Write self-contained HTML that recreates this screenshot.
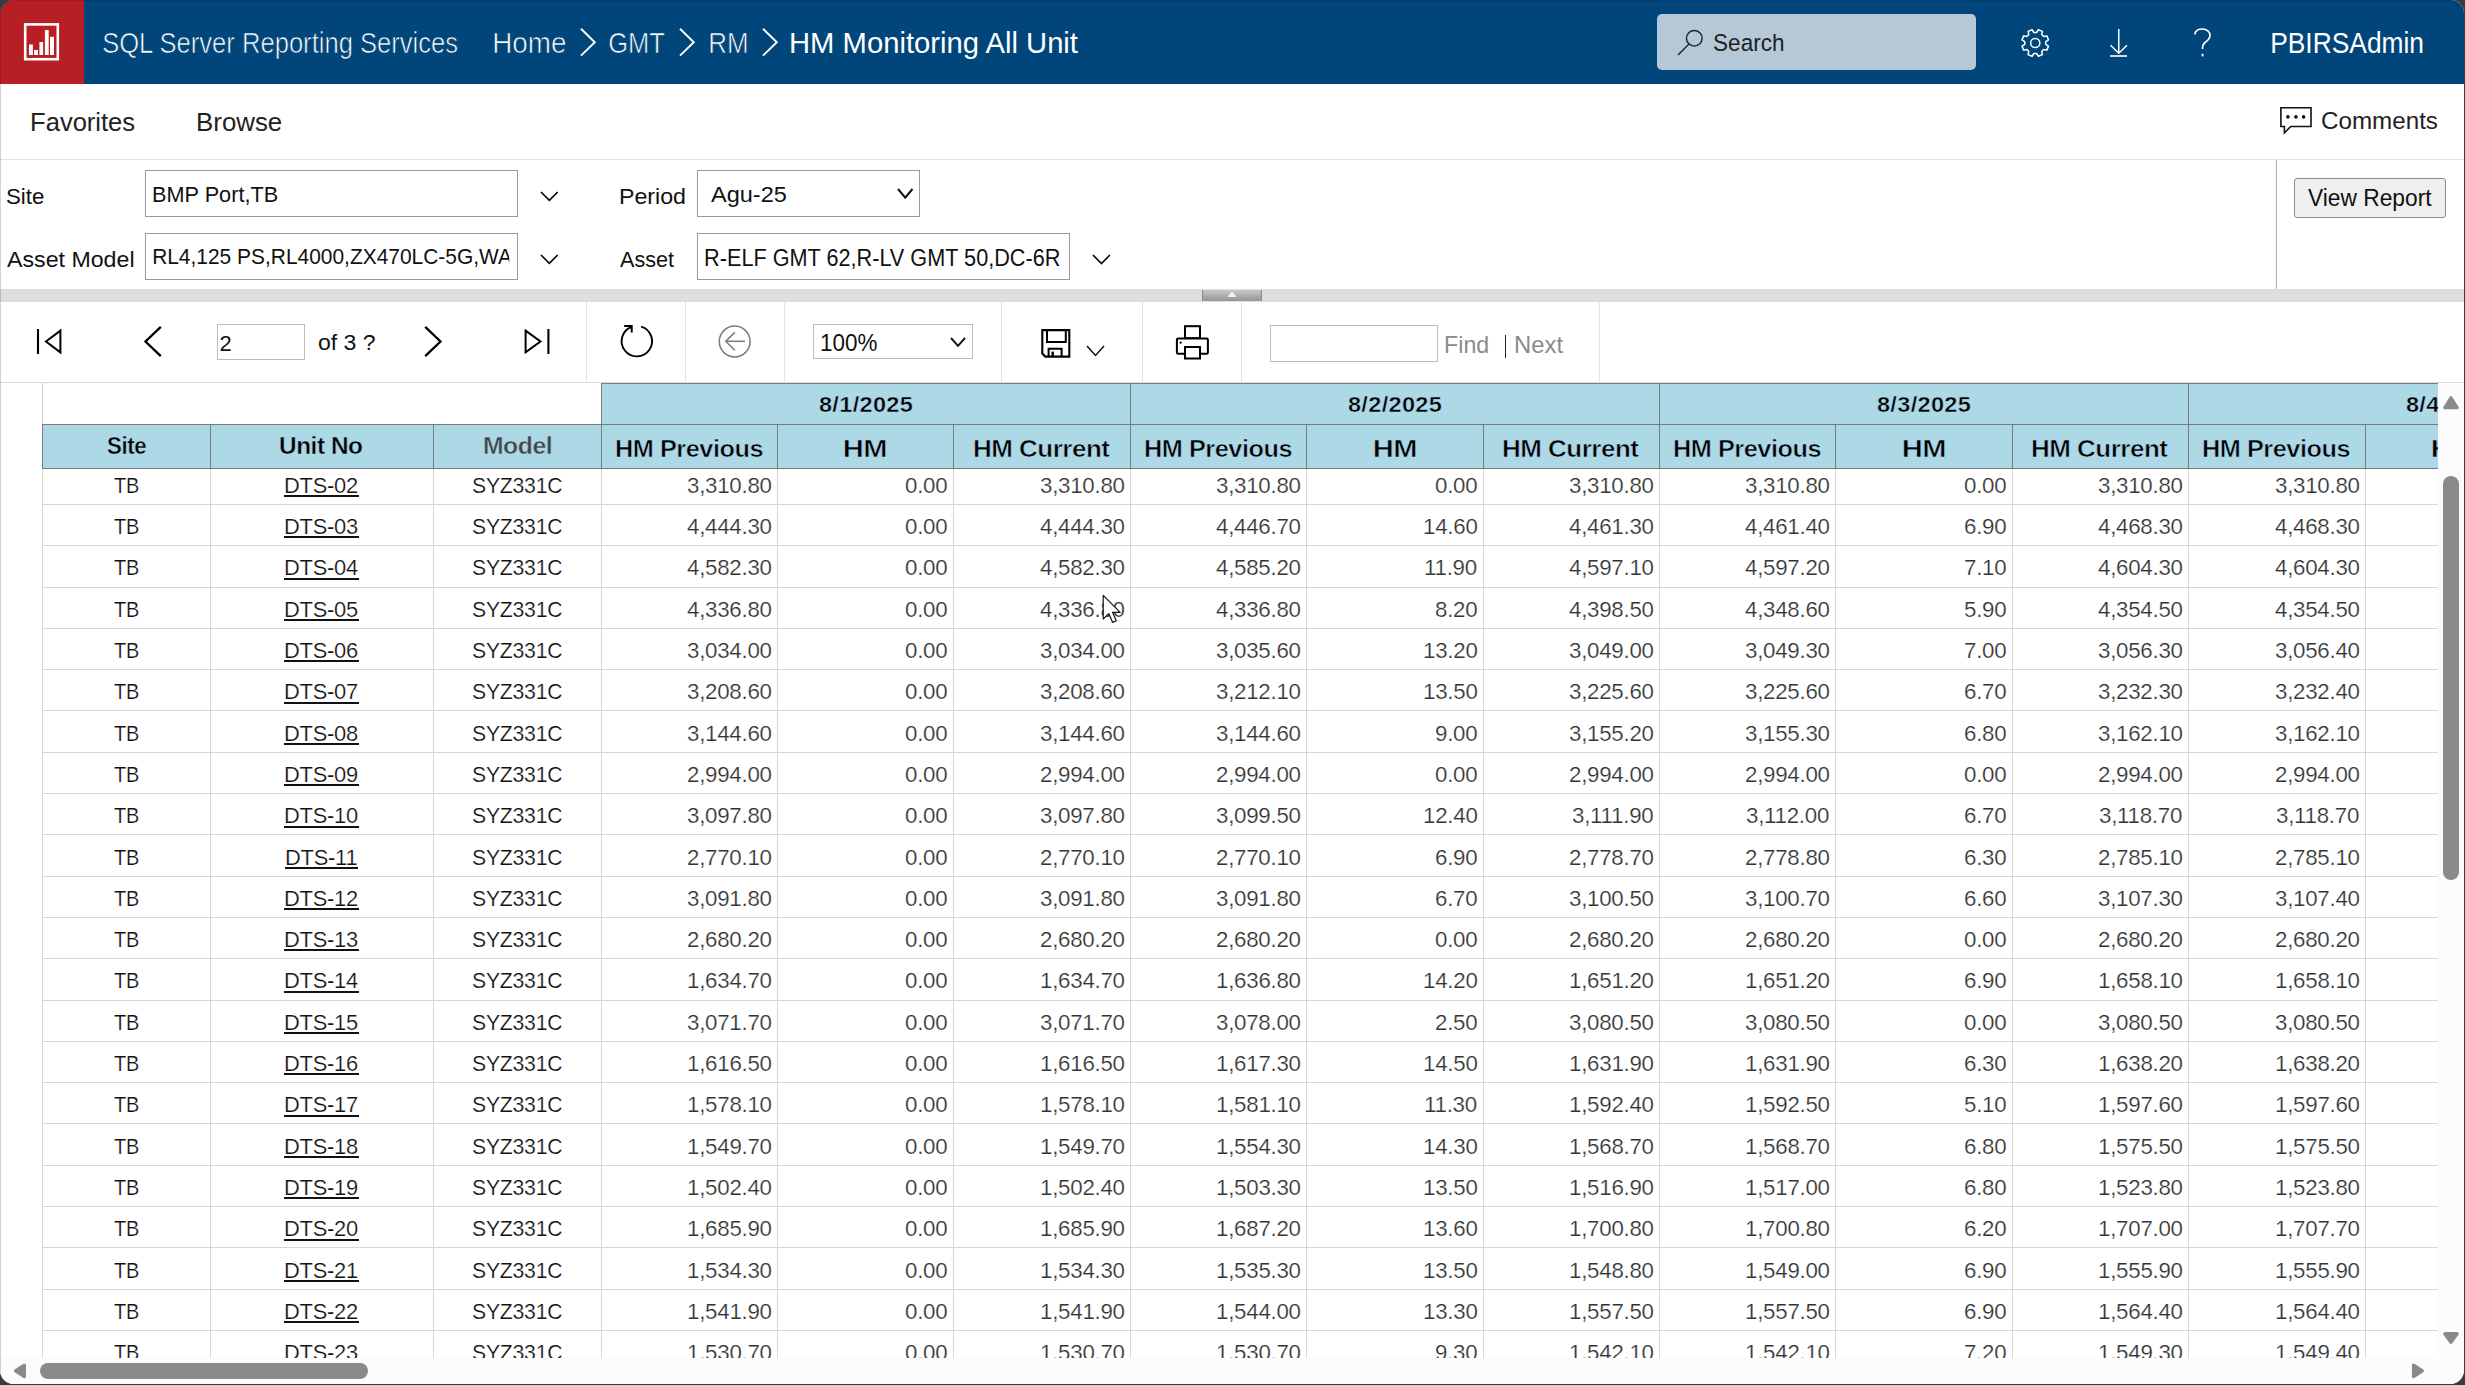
<!DOCTYPE html>
<html><head><meta charset="utf-8"><title>HM Monitoring All Unit - SQL Server Reporting Services</title>
<style>
html,body{margin:0;padding:0;background:#3b3b3b;}
#win{position:absolute;left:0;top:0;width:2465px;height:1385px;overflow:hidden;background:#3b3b3b;font-family:"Liberation Sans", sans-serif;}
#app{position:absolute;left:0;top:0;width:2464px;height:1383.8px;background:#fff;border-radius:15px 13px 14px 14px;overflow:hidden;}
#inner{position:absolute;left:0;top:0;width:2465px;height:1385px;}
</style></head><body><div id="win"><div id="app"><div id="inner">
<div style="position:absolute;left:0.00px;top:0.00px;width:2465.00px;height:84.00px;background:#00467a;"></div>
<div style="position:absolute;left:0.00px;top:0.00px;width:84.00px;height:84.00px;background:#b81f24;"></div>
<svg style="position:absolute;left:0px;top:0px;" width="84" height="84" viewBox="0 0 84 84"><rect x="25.2" y="24.4" width="32.6" height="34.8" fill="none" stroke="#fff" stroke-width="2.6"/>
<rect x="29" y="44.5" width="3.9" height="10.5" fill="#fff"/><rect x="34" y="50" width="4" height="5" fill="#fff"/>
<rect x="39.4" y="42" width="3.7" height="13" fill="#fff"/><rect x="44.9" y="30" width="3.8" height="25" fill="#fff"/>
<rect x="50" y="36.8" width="4" height="18.2" fill="#fff"/></svg>
<svg style="position:absolute;left:577.8px;top:25px;" width="22" height="34" viewBox="0 0 22 34"><polyline points="3,3.8 16.8,17.2 3,30.6" fill="none" stroke="#fff" stroke-width="1.9"/></svg>
<svg style="position:absolute;left:677.2px;top:25px;" width="22" height="34" viewBox="0 0 22 34"><polyline points="3,3.8 16.8,17.2 3,30.6" fill="none" stroke="#fff" stroke-width="1.9"/></svg>
<svg style="position:absolute;left:759.7px;top:25px;" width="22" height="34" viewBox="0 0 22 34"><polyline points="3,3.8 16.8,17.2 3,30.6" fill="none" stroke="#fff" stroke-width="1.9"/></svg>
<div style="position:absolute;left:1657.00px;top:14.00px;width:319.00px;height:56.00px;background:#b5c8d8;border-radius:5px;"></div>
<svg style="position:absolute;left:1670px;top:22px;" width="40" height="40" viewBox="0 0 40 40"><circle cx="24.3" cy="16.3" r="7.8" fill="none" stroke="#222" stroke-width="1.4"/><line x1="19" y1="22" x2="8" y2="33" stroke="#222" stroke-width="1.5"/></svg>
<svg style="position:absolute;left:2021px;top:29px;" width="29" height="28" viewBox="0 0 29 28"><polygon points="24.76,15.40 27.48,17.14 25.83,21.14 22.67,20.44 20.69,22.42 21.39,25.58 17.39,27.23 15.65,24.51 12.85,24.51 11.11,27.23 7.11,25.58 7.81,22.42 5.83,20.44 2.67,21.14 1.02,17.14 3.74,15.40 3.74,12.60 1.02,10.86 2.67,6.86 5.83,7.56 7.81,5.58 7.11,2.42 11.11,0.77 12.85,3.49 15.65,3.49 17.39,0.77 21.39,2.42 20.69,5.58 22.67,7.56 25.83,6.86 27.48,10.86 24.76,12.60" fill="none" stroke="#fff" stroke-width="1.5" stroke-linejoin="round"/><circle cx="14.25" cy="14" r="4.6" fill="none" stroke="#fff" stroke-width="1.5"/></svg>
<svg style="position:absolute;left:2105px;top:26px;" width="28" height="34" viewBox="0 0 28 34"><line x1="13.75" y1="3" x2="13.75" y2="27" stroke="#fff" stroke-width="1.5"/><polyline points="5.5,19.3 13.75,27.3 22,19.3" fill="none" stroke="#fff" stroke-width="1.5"/><line x1="5" y1="30" x2="22" y2="30" stroke="#fff" stroke-width="1.6"/></svg>
<svg style="position:absolute;left:2190px;top:26px;" width="26" height="34" viewBox="0 0 26 34"><path d="M5,8.5 C5,4.5 8.5,3 12.5,3 C17,3 20,6 20,9.5 C20,13 17.5,14.5 15,16.5 C13,18 12.5,19.5 12.5,23" fill="none" stroke="#fff" stroke-width="1.6"/><rect x="11.6" y="27.8" width="1.9" height="2.6" fill="#fff"/></svg>
<div style="position:absolute;left:0.00px;top:158.50px;width:2465.00px;height:1.50px;background:#e3e3e3;"></div>
<svg style="position:absolute;left:2276px;top:102px;" width="40" height="36" viewBox="0 0 40 36"><path d="M4.9,5.7 H35 V24.5 H14.8 L8.4,30.8 V24.5 H4.9 Z" fill="none" stroke="#111" stroke-width="1.6"/>
<circle cx="11.9" cy="14.9" r="1.8" fill="#111"/><circle cx="19.9" cy="14.9" r="1.8" fill="#111"/><circle cx="27.6" cy="14.9" r="1.8" fill="#111"/></svg>
<div style="position:absolute;left:2275.50px;top:160.00px;width:1.20px;height:129.00px;background:#b0b0b0;"></div>
<div style="position:absolute;left:145.00px;top:170.00px;width:373.00px;height:47.00px;background:#fff;border:1px solid #9a9a9a;box-sizing:border-box;"></div>
<div style="position:absolute;left:145.00px;top:233.00px;width:373.00px;height:47.00px;background:#fff;border:1px solid #9a9a9a;box-sizing:border-box;"></div>
<svg style="position:absolute;left:537.8px;top:188.8px;" width="22.7" height="14.4" viewBox="0 0 22.7 14.4"><polyline points="3,3 11.35,11.4 19.7,3" fill="none" stroke="#000" stroke-width="1.6"/></svg>
<svg style="position:absolute;left:537.8px;top:251.8px;" width="22.7" height="14.4" viewBox="0 0 22.7 14.4"><polyline points="3,3 11.35,11.4 19.7,3" fill="none" stroke="#000" stroke-width="1.6"/></svg>
<div style="position:absolute;left:697.00px;top:170.00px;width:223.00px;height:46.50px;background:#fff;border:1px solid #9a9a9a;box-sizing:border-box;"></div>
<svg style="position:absolute;left:895px;top:186.3px;" width="20.5" height="14.6" viewBox="0 0 20.5 14.6"><polyline points="3,3 10.25,11.6 17.5,3" fill="none" stroke="#111" stroke-width="2.0"/></svg>
<div style="position:absolute;left:697.00px;top:233.00px;width:373.00px;height:47.00px;background:#fff;border:1px solid #9a9a9a;box-sizing:border-box;"></div>
<svg style="position:absolute;left:1089.8px;top:251.6px;" width="22.9" height="14.5" viewBox="0 0 22.9 14.5"><polyline points="3,3 11.45,11.5 19.9,3" fill="none" stroke="#000" stroke-width="1.6"/></svg>
<div style="position:absolute;left:2294.00px;top:178.00px;width:151.60px;height:39.50px;background:#efefef;border:1.2px solid #8c8c8c;border-radius:3px;box-sizing:border-box;"></div>
<div style="position:absolute;left:0.00px;top:289.00px;width:2465.00px;height:13.00px;background:#dedede;"></div>
<div style="position:absolute;left:1202.00px;top:290.00px;width:60.00px;height:11.00px;background:linear-gradient(#c9c9c9,#969696);box-shadow: inset 1px 0 0 #8a8a8a, inset -1px 0 0 #8a8a8a;"></div>
<svg style="position:absolute;left:1226px;top:290px;" width="12" height="8" viewBox="0 0 12 8"><polygon points="1.3,7 6,1.4 10.7,7" fill="#f0f0f0"/></svg>
<div style="position:absolute;left:0.00px;top:381.60px;width:2465.00px;height:1.20px;background:#dcdcdc;"></div>
<div style="position:absolute;left:586.00px;top:302.00px;width:1.10px;height:80.00px;background:#e2e2e2;"></div>
<div style="position:absolute;left:685.00px;top:302.00px;width:1.10px;height:80.00px;background:#e2e2e2;"></div>
<div style="position:absolute;left:783.90px;top:302.00px;width:1.10px;height:80.00px;background:#e2e2e2;"></div>
<div style="position:absolute;left:1000.70px;top:302.00px;width:1.10px;height:80.00px;background:#e2e2e2;"></div>
<div style="position:absolute;left:1142.00px;top:302.00px;width:1.10px;height:80.00px;background:#e2e2e2;"></div>
<div style="position:absolute;left:1240.90px;top:302.00px;width:1.10px;height:80.00px;background:#e2e2e2;"></div>
<div style="position:absolute;left:1598.80px;top:302.00px;width:1.10px;height:80.00px;background:#e2e2e2;"></div>
<svg style="position:absolute;left:30px;top:320px;" width="40" height="40" viewBox="0 0 40 40"><line x1="8" y1="9" x2="8" y2="34" stroke="#000" stroke-width="2.1"/><polygon points="30.4,10.6 16,21.5 30.4,32.4" fill="none" stroke="#000" stroke-width="2" stroke-linejoin="miter"/></svg>
<svg style="position:absolute;left:138px;top:320px;" width="30" height="42" viewBox="0 0 30 42"><polyline points="22.8,6.8 7.5,21.5 22.8,36.2" fill="none" stroke="#000" stroke-width="2.3"/></svg>
<div style="position:absolute;left:217.00px;top:324.00px;width:88.00px;height:36.00px;background:#fff;border:1px solid #bbbbbb;box-sizing:border-box;"></div>
<svg style="position:absolute;left:418px;top:320px;" width="30" height="42" viewBox="0 0 30 42"><polyline points="7.2,6.8 22.5,21.5 7.2,36.2" fill="none" stroke="#000" stroke-width="2.3"/></svg>
<svg style="position:absolute;left:515px;top:320px;" width="40" height="40" viewBox="0 0 40 40"><line x1="33.4" y1="9" x2="33.4" y2="34" stroke="#000" stroke-width="2.1"/><polygon points="10.6,10.6 25.5,21.5 10.6,32.4" fill="none" stroke="#000" stroke-width="2" stroke-linejoin="miter"/></svg>
<svg style="position:absolute;left:612px;top:318px;" width="48" height="46" viewBox="0 0 48 46"><path d="M19.6,8.9 A15.2,15.2 0 1 0 29.2,8.6" fill="none" stroke="#000" stroke-width="1.9"/><polyline points="12.2,8 19.7,8 19.7,14.5" fill="none" stroke="#000" stroke-width="2"/></svg>
<svg style="position:absolute;left:710px;top:318px;" width="48" height="46" viewBox="0 0 48 46"><circle cx="24.7" cy="23.5" r="15.4" fill="none" stroke="#7a7a7a" stroke-width="1.5"/><line x1="15.8" y1="23.3" x2="35" y2="23.3" stroke="#7a7a7a" stroke-width="1.5"/><polyline points="24.8,14.4 15.8,23.3 24.8,32.2" fill="none" stroke="#7a7a7a" stroke-width="1.5"/></svg>
<div style="position:absolute;left:813.00px;top:324.00px;width:160.00px;height:35.00px;background:#fff;border:1px solid #bbbbbb;box-sizing:border-box;"></div>
<svg style="position:absolute;left:947.9px;top:334.6px;" width="20" height="13.8" viewBox="0 0 20 13.8"><polyline points="3,3 10.0,10.8 17,3" fill="none" stroke="#111" stroke-width="1.9"/></svg>
<svg style="position:absolute;left:1036px;top:322px;" width="40" height="40" viewBox="0 0 40 40"><path d="M6.3,8.1 H33.3 V34.6 H9.3 L6.3,31.6 Z" fill="none" stroke="#000" stroke-width="2.1"/>
<path d="M11,8 V20 H29.8 V8" fill="none" stroke="#000" stroke-width="2"/>
<path d="M12.6,34.6 V26.8 H25.6 V34.6" fill="none" stroke="#000" stroke-width="2"/><rect x="15.5" y="29.6" width="2.4" height="4.5" fill="#000"/></svg>
<svg style="position:absolute;left:1084px;top:343.3px;" width="23" height="15.5" viewBox="0 0 23 15.5"><polyline points="3,3 11.5,12.5 20,3" fill="none" stroke="#111" stroke-width="1.5"/></svg>
<svg style="position:absolute;left:1170px;top:320px;" width="44" height="42" viewBox="0 0 44 42"><rect x="15" y="6.2" width="15" height="12" fill="none" stroke="#000" stroke-width="2"/>
<rect x="6.9" y="18.6" width="31" height="15.2" rx="1.2" fill="#fff" stroke="#000" stroke-width="2"/>
<rect x="15" y="27" width="15" height="11.5" fill="#fff" stroke="#000" stroke-width="2"/><circle cx="10.7" cy="22.7" r="1.1" fill="#000"/></svg>
<div style="position:absolute;left:1270.00px;top:325.00px;width:168.00px;height:37.00px;background:#fff;border:1px solid #bbbbbb;box-sizing:border-box;"></div>
<div style="position:absolute;left:1504.50px;top:335.00px;width:1.50px;height:22.50px;background:#222;"></div>
<div style="position:absolute;left:101.74px;top:29.35px;font-size:29.0px;line-height:29.0px;letter-spacing:0.000px;color:#fff;font-weight:normal;white-space:nowrap;transform:scaleX(0.8822);transform-origin:1.16px 0;-webkit-text-stroke:0.7px #00467a;">SQL Server Reporting Services</div>
<div style="position:absolute;left:491.64px;top:28.02px;font-size:29.5px;line-height:29.5px;letter-spacing:0.000px;color:#fff;font-weight:normal;white-space:nowrap;transform:scaleX(0.9433);transform-origin:2.36px 0;-webkit-text-stroke:0.7px #00467a;">Home</div>
<div style="position:absolute;left:608.12px;top:28.02px;font-size:29.5px;line-height:29.5px;letter-spacing:0.000px;color:#fff;font-weight:normal;white-space:nowrap;transform:scaleX(0.8637);transform-origin:1.48px 0;-webkit-text-stroke:0.7px #00467a;">GMT</div>
<div style="position:absolute;left:707.54px;top:28.02px;font-size:29.5px;line-height:29.5px;letter-spacing:0.000px;color:#fff;font-weight:normal;white-space:nowrap;transform:scaleX(0.8776);transform-origin:2.36px 0;-webkit-text-stroke:0.7px #00467a;">RM</div>
<div style="position:absolute;left:789.34px;top:28.02px;font-size:29.5px;line-height:29.5px;letter-spacing:0.000px;color:#fff;font-weight:normal;white-space:nowrap;transform:scaleX(0.9902);transform-origin:2.36px 0;">HM Monitoring All Unit</div>
<div style="position:absolute;left:1713.02px;top:31.06px;font-size:24.5px;line-height:24.5px;letter-spacing:0.000px;color:#222;font-weight:normal;white-space:nowrap;transform:scaleX(0.9193);transform-origin:0.98px 0;">Search</div>
<div style="position:absolute;left:2270.28px;top:28.75px;font-size:29.0px;line-height:29.0px;letter-spacing:0.000px;color:#fff;font-weight:normal;white-space:nowrap;transform:scaleX(0.9088);transform-origin:2.32px 0;">PBIRSAdmin</div>
<div style="position:absolute;left:30.48px;top:108.56px;font-size:26.5px;line-height:26.5px;letter-spacing:0.000px;color:#222;font-weight:normal;white-space:nowrap;transform:scaleX(0.9636);transform-origin:2.12px 0;">Favorites</div>
<div style="position:absolute;left:195.78px;top:108.56px;font-size:26.5px;line-height:26.5px;letter-spacing:0.000px;color:#222;font-weight:normal;white-space:nowrap;transform:scaleX(0.9744);transform-origin:2.12px 0;">Browse</div>
<div style="position:absolute;left:2320.68px;top:109.26px;font-size:24.5px;line-height:24.5px;letter-spacing:0.000px;color:#222;font-weight:normal;white-space:nowrap;transform:scaleX(0.9873);transform-origin:1.23px 0;">Comments</div>
<div style="position:absolute;left:5.70px;top:185.95px;font-size:22.5px;line-height:22.5px;letter-spacing:0.000px;color:#111;font-weight:normal;white-space:nowrap;transform:scaleX(0.9904);transform-origin:0.90px 0;">Site</div>
<div style="position:absolute;left:152.00px;top:183.75px;font-size:22.5px;line-height:22.5px;letter-spacing:0.000px;color:#111;font-weight:normal;white-space:nowrap;transform:scaleX(0.9633);transform-origin:1.80px 0;">BMP Port,TB</div>
<div style="position:absolute;left:6.60px;top:248.75px;font-size:22.5px;line-height:22.5px;letter-spacing:0.000px;color:#111;font-weight:normal;white-space:nowrap;transform:scaleX(1.0302);transform-origin:0.00px 0;">Asset Model</div>
<div style="position:absolute;left:152.00px;top:246.25px;font-size:22.5px;line-height:22.5px;letter-spacing:0.000px;color:#111;font-weight:normal;white-space:nowrap;width:383.9px;overflow:hidden;transform:scaleX(0.9300);transform-origin:1.80px 0;">RL4,125 PS,RL4000,ZX470LC-5G,WA</div>
<div style="position:absolute;left:618.60px;top:185.75px;font-size:22.5px;line-height:22.5px;letter-spacing:0.000px;color:#111;font-weight:normal;white-space:nowrap;transform:scaleX(1.0311);transform-origin:1.80px 0;">Period</div>
<div style="position:absolute;left:711.00px;top:183.95px;font-size:22.5px;line-height:22.5px;letter-spacing:0.000px;color:#111;font-weight:normal;white-space:nowrap;transform:scaleX(1.0454);transform-origin:0.00px 0;">Agu-25</div>
<div style="position:absolute;left:620.40px;top:248.75px;font-size:22.5px;line-height:22.5px;letter-spacing:0.000px;color:#111;font-weight:normal;white-space:nowrap;transform:scaleX(0.9588);transform-origin:0.00px 0;">Asset</div>
<div style="position:absolute;left:703.76px;top:246.53px;font-size:23.0px;line-height:23.0px;letter-spacing:0.000px;color:#111;font-weight:normal;white-space:nowrap;transform:scaleX(0.9418);transform-origin:1.84px 0;">R-ELF GMT 62,R-LV GMT 50,DC-6R</div>
<div style="position:absolute;left:2308.00px;top:187.20px;font-size:23.5px;line-height:23.5px;letter-spacing:0.000px;color:#111;font-weight:normal;white-space:nowrap;transform:scaleX(0.9685);transform-origin:0.00px 0;">View Report</div>
<div style="position:absolute;left:219.60px;top:332.57px;font-size:22px;line-height:22px;letter-spacing:0.000px;color:#111;font-weight:normal;white-space:nowrap;">2</div>
<div style="position:absolute;left:318.12px;top:332.37px;font-size:22px;line-height:22px;letter-spacing:0.000px;color:#111;font-weight:normal;white-space:nowrap;transform:scaleX(1.0475);transform-origin:0.88px 0;">of 3 ?</div>
<div style="position:absolute;left:820.29px;top:332.03px;font-size:23.0px;line-height:23.0px;letter-spacing:0.000px;color:#111;font-weight:normal;white-space:nowrap;transform:scaleX(0.9745);transform-origin:1.61px 0;">100%</div>
<div style="position:absolute;left:1443.74px;top:332.56px;font-size:24.5px;line-height:24.5px;letter-spacing:0.000px;color:#8a8a8a;font-weight:normal;white-space:nowrap;transform:scaleX(0.9453);transform-origin:1.96px 0;">Find</div>
<div style="position:absolute;left:1514.24px;top:332.56px;font-size:24.5px;line-height:24.5px;letter-spacing:0.000px;color:#8a8a8a;font-weight:normal;white-space:nowrap;transform:scaleX(0.9718);transform-origin:1.96px 0;">Next</div>
<div style="position:absolute;left:0;top:383px;width:2438px;height:974.5px;overflow:hidden;">
<div style="position:absolute;left:42.00px;top:85.00px;width:1.00px;height:889.50px;background:#d6d6d6;"></div>
<div style="position:absolute;left:210.00px;top:85.00px;width:1.00px;height:889.50px;background:#d6d6d6;"></div>
<div style="position:absolute;left:433.00px;top:85.00px;width:1.00px;height:889.50px;background:#d6d6d6;"></div>
<div style="position:absolute;left:601.00px;top:85.00px;width:1.00px;height:889.50px;background:#d6d6d6;"></div>
<div style="position:absolute;left:777.00px;top:85.00px;width:1.00px;height:889.50px;background:#d6d6d6;"></div>
<div style="position:absolute;left:953.00px;top:85.00px;width:1.00px;height:889.50px;background:#d6d6d6;"></div>
<div style="position:absolute;left:1130.00px;top:85.00px;width:1.00px;height:889.50px;background:#d6d6d6;"></div>
<div style="position:absolute;left:1306.00px;top:85.00px;width:1.00px;height:889.50px;background:#d6d6d6;"></div>
<div style="position:absolute;left:1483.00px;top:85.00px;width:1.00px;height:889.50px;background:#d6d6d6;"></div>
<div style="position:absolute;left:1659.00px;top:85.00px;width:1.00px;height:889.50px;background:#d6d6d6;"></div>
<div style="position:absolute;left:1835.00px;top:85.00px;width:1.00px;height:889.50px;background:#d6d6d6;"></div>
<div style="position:absolute;left:2012.00px;top:85.00px;width:1.00px;height:889.50px;background:#d6d6d6;"></div>
<div style="position:absolute;left:2188.00px;top:85.00px;width:1.00px;height:889.50px;background:#d6d6d6;"></div>
<div style="position:absolute;left:2365.00px;top:85.00px;width:1.00px;height:889.50px;background:#d6d6d6;"></div>
<div style="position:absolute;left:2541.00px;top:85.00px;width:1.00px;height:889.50px;background:#d6d6d6;"></div>
<div style="position:absolute;left:2718.00px;top:85.00px;width:1.00px;height:889.50px;background:#d6d6d6;"></div>
<div style="position:absolute;left:42.00px;top:121.00px;width:2396.00px;height:1.00px;background:#d6d6d6;"></div>
<div style="position:absolute;left:42.00px;top:162.00px;width:2396.00px;height:1.00px;background:#d6d6d6;"></div>
<div style="position:absolute;left:42.00px;top:204.00px;width:2396.00px;height:1.00px;background:#d6d6d6;"></div>
<div style="position:absolute;left:42.00px;top:245.00px;width:2396.00px;height:1.00px;background:#d6d6d6;"></div>
<div style="position:absolute;left:42.00px;top:286.00px;width:2396.00px;height:1.00px;background:#d6d6d6;"></div>
<div style="position:absolute;left:42.00px;top:327.00px;width:2396.00px;height:1.00px;background:#d6d6d6;"></div>
<div style="position:absolute;left:42.00px;top:369.00px;width:2396.00px;height:1.00px;background:#d6d6d6;"></div>
<div style="position:absolute;left:42.00px;top:410.00px;width:2396.00px;height:1.00px;background:#d6d6d6;"></div>
<div style="position:absolute;left:42.00px;top:451.00px;width:2396.00px;height:1.00px;background:#d6d6d6;"></div>
<div style="position:absolute;left:42.00px;top:493.00px;width:2396.00px;height:1.00px;background:#d6d6d6;"></div>
<div style="position:absolute;left:42.00px;top:534.00px;width:2396.00px;height:1.00px;background:#d6d6d6;"></div>
<div style="position:absolute;left:42.00px;top:575.00px;width:2396.00px;height:1.00px;background:#d6d6d6;"></div>
<div style="position:absolute;left:42.00px;top:617.00px;width:2396.00px;height:1.00px;background:#d6d6d6;"></div>
<div style="position:absolute;left:42.00px;top:658.00px;width:2396.00px;height:1.00px;background:#d6d6d6;"></div>
<div style="position:absolute;left:42.00px;top:699.00px;width:2396.00px;height:1.00px;background:#d6d6d6;"></div>
<div style="position:absolute;left:42.00px;top:740.00px;width:2396.00px;height:1.00px;background:#d6d6d6;"></div>
<div style="position:absolute;left:42.00px;top:782.00px;width:2396.00px;height:1.00px;background:#d6d6d6;"></div>
<div style="position:absolute;left:42.00px;top:823.00px;width:2396.00px;height:1.00px;background:#d6d6d6;"></div>
<div style="position:absolute;left:42.00px;top:864.00px;width:2396.00px;height:1.00px;background:#d6d6d6;"></div>
<div style="position:absolute;left:42.00px;top:906.00px;width:2396.00px;height:1.00px;background:#d6d6d6;"></div>
<div style="position:absolute;left:42.00px;top:947.00px;width:2396.00px;height:1.00px;background:#d6d6d6;"></div>
<div style="position:absolute;left:42.00px;top:988.00px;width:2396.00px;height:1.00px;background:#d6d6d6;"></div>
<div style="position:absolute;left:113.95px;top:91.85px;font-size:22.5px;line-height:22.5px;letter-spacing:-0.25px;color:#111;font-weight:normal;white-space:nowrap;transform:scaleX(0.8854);transform-origin:0.45px 0;-webkit-text-stroke:0.22px #fff;">TB</div>
<div style="position:absolute;left:284.30px;top:91.85px;font-size:22.5px;line-height:22.5px;letter-spacing:-0.25px;color:#111;font-weight:normal;white-space:nowrap;transform:scaleX(0.9723);transform-origin:1.80px 0;-webkit-text-stroke:0.22px #fff;">DTS-02</div>
<div style="position:absolute;left:284.10px;top:112.10px;width:75.00px;height:2.00px;background:#111;"></div>
<div style="position:absolute;left:472.00px;top:91.85px;font-size:22.5px;line-height:22.5px;letter-spacing:-0.25px;color:#111;font-weight:normal;white-space:nowrap;transform:scaleX(0.9415);transform-origin:0.90px 0;-webkit-text-stroke:0.22px #fff;">SYZ331C</div>
<div style="position:absolute;left:686.83px;top:91.85px;font-size:22.5px;line-height:22.5px;letter-spacing:-0.25px;color:#333;font-weight:normal;white-space:nowrap;transform:scaleX(0.9900);transform-origin:0.68px 0;-webkit-text-stroke:0.22px #fff;">3,310.80</div>
<div style="position:absolute;left:905.29px;top:91.85px;font-size:22.5px;line-height:22.5px;letter-spacing:-0.25px;color:#333;font-weight:normal;white-space:nowrap;transform:scaleX(0.9900);transform-origin:0.68px 0;-webkit-text-stroke:0.22px #fff;">0.00</div>
<div style="position:absolute;left:1040.23px;top:91.85px;font-size:22.5px;line-height:22.5px;letter-spacing:-0.25px;color:#333;font-weight:normal;white-space:nowrap;transform:scaleX(0.9900);transform-origin:0.68px 0;-webkit-text-stroke:0.22px #fff;">3,310.80</div>
<div style="position:absolute;left:1215.73px;top:91.85px;font-size:22.5px;line-height:22.5px;letter-spacing:-0.25px;color:#333;font-weight:normal;white-space:nowrap;transform:scaleX(0.9900);transform-origin:0.68px 0;-webkit-text-stroke:0.22px #fff;">3,310.80</div>
<div style="position:absolute;left:1434.89px;top:91.85px;font-size:22.5px;line-height:22.5px;letter-spacing:-0.25px;color:#333;font-weight:normal;white-space:nowrap;transform:scaleX(0.9900);transform-origin:0.68px 0;-webkit-text-stroke:0.22px #fff;">0.00</div>
<div style="position:absolute;left:1568.93px;top:91.85px;font-size:22.5px;line-height:22.5px;letter-spacing:-0.25px;color:#333;font-weight:normal;white-space:nowrap;transform:scaleX(0.9900);transform-origin:0.68px 0;-webkit-text-stroke:0.22px #fff;">3,310.80</div>
<div style="position:absolute;left:1744.62px;top:91.85px;font-size:22.5px;line-height:22.5px;letter-spacing:-0.25px;color:#333;font-weight:normal;white-space:nowrap;transform:scaleX(0.9900);transform-origin:0.68px 0;-webkit-text-stroke:0.22px #fff;">3,310.80</div>
<div style="position:absolute;left:1964.09px;top:91.85px;font-size:22.5px;line-height:22.5px;letter-spacing:-0.25px;color:#333;font-weight:normal;white-space:nowrap;transform:scaleX(0.9900);transform-origin:0.68px 0;-webkit-text-stroke:0.22px #fff;">0.00</div>
<div style="position:absolute;left:2097.72px;top:91.85px;font-size:22.5px;line-height:22.5px;letter-spacing:-0.25px;color:#333;font-weight:normal;white-space:nowrap;transform:scaleX(0.9900);transform-origin:0.68px 0;-webkit-text-stroke:0.22px #fff;">3,310.80</div>
<div style="position:absolute;left:2274.72px;top:91.85px;font-size:22.5px;line-height:22.5px;letter-spacing:-0.25px;color:#333;font-weight:normal;white-space:nowrap;transform:scaleX(0.9900);transform-origin:0.68px 0;-webkit-text-stroke:0.22px #fff;">3,310.80</div>
<div style="position:absolute;left:113.95px;top:133.15px;font-size:22.5px;line-height:22.5px;letter-spacing:-0.25px;color:#111;font-weight:normal;white-space:nowrap;transform:scaleX(0.8854);transform-origin:0.45px 0;-webkit-text-stroke:0.22px #fff;">TB</div>
<div style="position:absolute;left:284.19px;top:133.15px;font-size:22.5px;line-height:22.5px;letter-spacing:-0.25px;color:#111;font-weight:normal;white-space:nowrap;transform:scaleX(0.9723);transform-origin:1.80px 0;-webkit-text-stroke:0.22px #fff;">DTS-03</div>
<div style="position:absolute;left:283.99px;top:153.40px;width:75.22px;height:2.00px;background:#111;"></div>
<div style="position:absolute;left:472.00px;top:133.15px;font-size:22.5px;line-height:22.5px;letter-spacing:-0.25px;color:#111;font-weight:normal;white-space:nowrap;transform:scaleX(0.9415);transform-origin:0.90px 0;-webkit-text-stroke:0.22px #fff;">SYZ331C</div>
<div style="position:absolute;left:686.83px;top:133.15px;font-size:22.5px;line-height:22.5px;letter-spacing:-0.25px;color:#333;font-weight:normal;white-space:nowrap;transform:scaleX(0.9900);transform-origin:0.45px 0;-webkit-text-stroke:0.22px #fff;">4,444.30</div>
<div style="position:absolute;left:905.29px;top:133.15px;font-size:22.5px;line-height:22.5px;letter-spacing:-0.25px;color:#333;font-weight:normal;white-space:nowrap;transform:scaleX(0.9900);transform-origin:0.68px 0;-webkit-text-stroke:0.22px #fff;">0.00</div>
<div style="position:absolute;left:1040.23px;top:133.15px;font-size:22.5px;line-height:22.5px;letter-spacing:-0.25px;color:#333;font-weight:normal;white-space:nowrap;transform:scaleX(0.9900);transform-origin:0.45px 0;-webkit-text-stroke:0.22px #fff;">4,444.30</div>
<div style="position:absolute;left:1215.73px;top:133.15px;font-size:22.5px;line-height:22.5px;letter-spacing:-0.25px;color:#333;font-weight:normal;white-space:nowrap;transform:scaleX(0.9900);transform-origin:0.45px 0;-webkit-text-stroke:0.22px #fff;">4,446.70</div>
<div style="position:absolute;left:1422.74px;top:133.15px;font-size:22.5px;line-height:22.5px;letter-spacing:-0.25px;color:#333;font-weight:normal;white-space:nowrap;transform:scaleX(0.9900);transform-origin:1.57px 0;-webkit-text-stroke:0.22px #fff;">14.60</div>
<div style="position:absolute;left:1568.93px;top:133.15px;font-size:22.5px;line-height:22.5px;letter-spacing:-0.25px;color:#333;font-weight:normal;white-space:nowrap;transform:scaleX(0.9900);transform-origin:0.45px 0;-webkit-text-stroke:0.22px #fff;">4,461.30</div>
<div style="position:absolute;left:1744.63px;top:133.15px;font-size:22.5px;line-height:22.5px;letter-spacing:-0.25px;color:#333;font-weight:normal;white-space:nowrap;transform:scaleX(0.9900);transform-origin:0.45px 0;-webkit-text-stroke:0.22px #fff;">4,461.40</div>
<div style="position:absolute;left:1964.08px;top:133.15px;font-size:22.5px;line-height:22.5px;letter-spacing:-0.25px;color:#333;font-weight:normal;white-space:nowrap;transform:scaleX(0.9900);transform-origin:1.12px 0;-webkit-text-stroke:0.22px #fff;">6.90</div>
<div style="position:absolute;left:2097.73px;top:133.15px;font-size:22.5px;line-height:22.5px;letter-spacing:-0.25px;color:#333;font-weight:normal;white-space:nowrap;transform:scaleX(0.9900);transform-origin:0.45px 0;-webkit-text-stroke:0.22px #fff;">4,468.30</div>
<div style="position:absolute;left:2274.73px;top:133.15px;font-size:22.5px;line-height:22.5px;letter-spacing:-0.25px;color:#333;font-weight:normal;white-space:nowrap;transform:scaleX(0.9900);transform-origin:0.45px 0;-webkit-text-stroke:0.22px #fff;">4,468.30</div>
<div style="position:absolute;left:113.95px;top:174.45px;font-size:22.5px;line-height:22.5px;letter-spacing:-0.25px;color:#111;font-weight:normal;white-space:nowrap;transform:scaleX(0.8854);transform-origin:0.45px 0;-webkit-text-stroke:0.22px #fff;">TB</div>
<div style="position:absolute;left:284.08px;top:174.45px;font-size:22.5px;line-height:22.5px;letter-spacing:-0.25px;color:#111;font-weight:normal;white-space:nowrap;transform:scaleX(0.9723);transform-origin:1.80px 0;-webkit-text-stroke:0.22px #fff;">DTS-04</div>
<div style="position:absolute;left:283.88px;top:194.70px;width:75.44px;height:2.00px;background:#111;"></div>
<div style="position:absolute;left:472.00px;top:174.45px;font-size:22.5px;line-height:22.5px;letter-spacing:-0.25px;color:#111;font-weight:normal;white-space:nowrap;transform:scaleX(0.9415);transform-origin:0.90px 0;-webkit-text-stroke:0.22px #fff;">SYZ331C</div>
<div style="position:absolute;left:686.83px;top:174.45px;font-size:22.5px;line-height:22.5px;letter-spacing:-0.25px;color:#333;font-weight:normal;white-space:nowrap;transform:scaleX(0.9900);transform-origin:0.45px 0;-webkit-text-stroke:0.22px #fff;">4,582.30</div>
<div style="position:absolute;left:905.29px;top:174.45px;font-size:22.5px;line-height:22.5px;letter-spacing:-0.25px;color:#333;font-weight:normal;white-space:nowrap;transform:scaleX(0.9900);transform-origin:0.68px 0;-webkit-text-stroke:0.22px #fff;">0.00</div>
<div style="position:absolute;left:1040.23px;top:174.45px;font-size:22.5px;line-height:22.5px;letter-spacing:-0.25px;color:#333;font-weight:normal;white-space:nowrap;transform:scaleX(0.9900);transform-origin:0.45px 0;-webkit-text-stroke:0.22px #fff;">4,582.30</div>
<div style="position:absolute;left:1215.73px;top:174.45px;font-size:22.5px;line-height:22.5px;letter-spacing:-0.25px;color:#333;font-weight:normal;white-space:nowrap;transform:scaleX(0.9900);transform-origin:0.45px 0;-webkit-text-stroke:0.22px #fff;">4,585.20</div>
<div style="position:absolute;left:1424.39px;top:174.45px;font-size:22.5px;line-height:22.5px;letter-spacing:-0.25px;color:#333;font-weight:normal;white-space:nowrap;transform:scaleX(0.9900);transform-origin:1.57px 0;-webkit-text-stroke:0.22px #fff;">11.90</div>
<div style="position:absolute;left:1568.93px;top:174.45px;font-size:22.5px;line-height:22.5px;letter-spacing:-0.25px;color:#333;font-weight:normal;white-space:nowrap;transform:scaleX(0.9900);transform-origin:0.45px 0;-webkit-text-stroke:0.22px #fff;">4,597.10</div>
<div style="position:absolute;left:1744.63px;top:174.45px;font-size:22.5px;line-height:22.5px;letter-spacing:-0.25px;color:#333;font-weight:normal;white-space:nowrap;transform:scaleX(0.9900);transform-origin:0.45px 0;-webkit-text-stroke:0.22px #fff;">4,597.20</div>
<div style="position:absolute;left:1964.08px;top:174.45px;font-size:22.5px;line-height:22.5px;letter-spacing:-0.25px;color:#333;font-weight:normal;white-space:nowrap;transform:scaleX(0.9900);transform-origin:1.12px 0;-webkit-text-stroke:0.22px #fff;">7.10</div>
<div style="position:absolute;left:2097.73px;top:174.45px;font-size:22.5px;line-height:22.5px;letter-spacing:-0.25px;color:#333;font-weight:normal;white-space:nowrap;transform:scaleX(0.9900);transform-origin:0.45px 0;-webkit-text-stroke:0.22px #fff;">4,604.30</div>
<div style="position:absolute;left:2274.73px;top:174.45px;font-size:22.5px;line-height:22.5px;letter-spacing:-0.25px;color:#333;font-weight:normal;white-space:nowrap;transform:scaleX(0.9900);transform-origin:0.45px 0;-webkit-text-stroke:0.22px #fff;">4,604.30</div>
<div style="position:absolute;left:113.95px;top:215.75px;font-size:22.5px;line-height:22.5px;letter-spacing:-0.25px;color:#111;font-weight:normal;white-space:nowrap;transform:scaleX(0.8854);transform-origin:0.45px 0;-webkit-text-stroke:0.22px #fff;">TB</div>
<div style="position:absolute;left:284.19px;top:215.75px;font-size:22.5px;line-height:22.5px;letter-spacing:-0.25px;color:#111;font-weight:normal;white-space:nowrap;transform:scaleX(0.9723);transform-origin:1.80px 0;-webkit-text-stroke:0.22px #fff;">DTS-05</div>
<div style="position:absolute;left:283.99px;top:236.00px;width:75.22px;height:2.00px;background:#111;"></div>
<div style="position:absolute;left:472.00px;top:215.75px;font-size:22.5px;line-height:22.5px;letter-spacing:-0.25px;color:#111;font-weight:normal;white-space:nowrap;transform:scaleX(0.9415);transform-origin:0.90px 0;-webkit-text-stroke:0.22px #fff;">SYZ331C</div>
<div style="position:absolute;left:686.83px;top:215.75px;font-size:22.5px;line-height:22.5px;letter-spacing:-0.25px;color:#333;font-weight:normal;white-space:nowrap;transform:scaleX(0.9900);transform-origin:0.45px 0;-webkit-text-stroke:0.22px #fff;">4,336.80</div>
<div style="position:absolute;left:905.29px;top:215.75px;font-size:22.5px;line-height:22.5px;letter-spacing:-0.25px;color:#333;font-weight:normal;white-space:nowrap;transform:scaleX(0.9900);transform-origin:0.68px 0;-webkit-text-stroke:0.22px #fff;">0.00</div>
<div style="position:absolute;left:1040.23px;top:215.75px;font-size:22.5px;line-height:22.5px;letter-spacing:-0.25px;color:#333;font-weight:normal;white-space:nowrap;transform:scaleX(0.9900);transform-origin:0.45px 0;-webkit-text-stroke:0.22px #fff;">4,336.80</div>
<div style="position:absolute;left:1215.73px;top:215.75px;font-size:22.5px;line-height:22.5px;letter-spacing:-0.25px;color:#333;font-weight:normal;white-space:nowrap;transform:scaleX(0.9900);transform-origin:0.45px 0;-webkit-text-stroke:0.22px #fff;">4,336.80</div>
<div style="position:absolute;left:1434.89px;top:215.75px;font-size:22.5px;line-height:22.5px;letter-spacing:-0.25px;color:#333;font-weight:normal;white-space:nowrap;transform:scaleX(0.9900);transform-origin:0.90px 0;-webkit-text-stroke:0.22px #fff;">8.20</div>
<div style="position:absolute;left:1568.93px;top:215.75px;font-size:22.5px;line-height:22.5px;letter-spacing:-0.25px;color:#333;font-weight:normal;white-space:nowrap;transform:scaleX(0.9900);transform-origin:0.45px 0;-webkit-text-stroke:0.22px #fff;">4,398.50</div>
<div style="position:absolute;left:1744.63px;top:215.75px;font-size:22.5px;line-height:22.5px;letter-spacing:-0.25px;color:#333;font-weight:normal;white-space:nowrap;transform:scaleX(0.9900);transform-origin:0.45px 0;-webkit-text-stroke:0.22px #fff;">4,348.60</div>
<div style="position:absolute;left:1964.09px;top:215.75px;font-size:22.5px;line-height:22.5px;letter-spacing:-0.25px;color:#333;font-weight:normal;white-space:nowrap;transform:scaleX(0.9900);transform-origin:0.90px 0;-webkit-text-stroke:0.22px #fff;">5.90</div>
<div style="position:absolute;left:2097.73px;top:215.75px;font-size:22.5px;line-height:22.5px;letter-spacing:-0.25px;color:#333;font-weight:normal;white-space:nowrap;transform:scaleX(0.9900);transform-origin:0.45px 0;-webkit-text-stroke:0.22px #fff;">4,354.50</div>
<div style="position:absolute;left:2274.73px;top:215.75px;font-size:22.5px;line-height:22.5px;letter-spacing:-0.25px;color:#333;font-weight:normal;white-space:nowrap;transform:scaleX(0.9900);transform-origin:0.45px 0;-webkit-text-stroke:0.22px #fff;">4,354.50</div>
<div style="position:absolute;left:113.95px;top:257.05px;font-size:22.5px;line-height:22.5px;letter-spacing:-0.25px;color:#111;font-weight:normal;white-space:nowrap;transform:scaleX(0.8854);transform-origin:0.45px 0;-webkit-text-stroke:0.22px #fff;">TB</div>
<div style="position:absolute;left:284.19px;top:257.05px;font-size:22.5px;line-height:22.5px;letter-spacing:-0.25px;color:#111;font-weight:normal;white-space:nowrap;transform:scaleX(0.9723);transform-origin:1.80px 0;-webkit-text-stroke:0.22px #fff;">DTS-06</div>
<div style="position:absolute;left:283.99px;top:277.30px;width:75.22px;height:2.00px;background:#111;"></div>
<div style="position:absolute;left:472.00px;top:257.05px;font-size:22.5px;line-height:22.5px;letter-spacing:-0.25px;color:#111;font-weight:normal;white-space:nowrap;transform:scaleX(0.9415);transform-origin:0.90px 0;-webkit-text-stroke:0.22px #fff;">SYZ331C</div>
<div style="position:absolute;left:686.83px;top:257.05px;font-size:22.5px;line-height:22.5px;letter-spacing:-0.25px;color:#333;font-weight:normal;white-space:nowrap;transform:scaleX(0.9900);transform-origin:0.68px 0;-webkit-text-stroke:0.22px #fff;">3,034.00</div>
<div style="position:absolute;left:905.29px;top:257.05px;font-size:22.5px;line-height:22.5px;letter-spacing:-0.25px;color:#333;font-weight:normal;white-space:nowrap;transform:scaleX(0.9900);transform-origin:0.68px 0;-webkit-text-stroke:0.22px #fff;">0.00</div>
<div style="position:absolute;left:1040.23px;top:257.05px;font-size:22.5px;line-height:22.5px;letter-spacing:-0.25px;color:#333;font-weight:normal;white-space:nowrap;transform:scaleX(0.9900);transform-origin:0.68px 0;-webkit-text-stroke:0.22px #fff;">3,034.00</div>
<div style="position:absolute;left:1215.73px;top:257.05px;font-size:22.5px;line-height:22.5px;letter-spacing:-0.25px;color:#333;font-weight:normal;white-space:nowrap;transform:scaleX(0.9900);transform-origin:0.68px 0;-webkit-text-stroke:0.22px #fff;">3,035.60</div>
<div style="position:absolute;left:1422.74px;top:257.05px;font-size:22.5px;line-height:22.5px;letter-spacing:-0.25px;color:#333;font-weight:normal;white-space:nowrap;transform:scaleX(0.9900);transform-origin:1.57px 0;-webkit-text-stroke:0.22px #fff;">13.20</div>
<div style="position:absolute;left:1568.93px;top:257.05px;font-size:22.5px;line-height:22.5px;letter-spacing:-0.25px;color:#333;font-weight:normal;white-space:nowrap;transform:scaleX(0.9900);transform-origin:0.68px 0;-webkit-text-stroke:0.22px #fff;">3,049.00</div>
<div style="position:absolute;left:1744.62px;top:257.05px;font-size:22.5px;line-height:22.5px;letter-spacing:-0.25px;color:#333;font-weight:normal;white-space:nowrap;transform:scaleX(0.9900);transform-origin:0.68px 0;-webkit-text-stroke:0.22px #fff;">3,049.30</div>
<div style="position:absolute;left:1964.08px;top:257.05px;font-size:22.5px;line-height:22.5px;letter-spacing:-0.25px;color:#333;font-weight:normal;white-space:nowrap;transform:scaleX(0.9900);transform-origin:1.12px 0;-webkit-text-stroke:0.22px #fff;">7.00</div>
<div style="position:absolute;left:2097.72px;top:257.05px;font-size:22.5px;line-height:22.5px;letter-spacing:-0.25px;color:#333;font-weight:normal;white-space:nowrap;transform:scaleX(0.9900);transform-origin:0.68px 0;-webkit-text-stroke:0.22px #fff;">3,056.30</div>
<div style="position:absolute;left:2274.72px;top:257.05px;font-size:22.5px;line-height:22.5px;letter-spacing:-0.25px;color:#333;font-weight:normal;white-space:nowrap;transform:scaleX(0.9900);transform-origin:0.68px 0;-webkit-text-stroke:0.22px #fff;">3,056.40</div>
<div style="position:absolute;left:113.95px;top:298.35px;font-size:22.5px;line-height:22.5px;letter-spacing:-0.25px;color:#111;font-weight:normal;white-space:nowrap;transform:scaleX(0.8854);transform-origin:0.45px 0;-webkit-text-stroke:0.22px #fff;">TB</div>
<div style="position:absolute;left:284.30px;top:298.35px;font-size:22.5px;line-height:22.5px;letter-spacing:-0.25px;color:#111;font-weight:normal;white-space:nowrap;transform:scaleX(0.9723);transform-origin:1.80px 0;-webkit-text-stroke:0.22px #fff;">DTS-07</div>
<div style="position:absolute;left:284.10px;top:318.60px;width:75.00px;height:2.00px;background:#111;"></div>
<div style="position:absolute;left:472.00px;top:298.35px;font-size:22.5px;line-height:22.5px;letter-spacing:-0.25px;color:#111;font-weight:normal;white-space:nowrap;transform:scaleX(0.9415);transform-origin:0.90px 0;-webkit-text-stroke:0.22px #fff;">SYZ331C</div>
<div style="position:absolute;left:686.83px;top:298.35px;font-size:22.5px;line-height:22.5px;letter-spacing:-0.25px;color:#333;font-weight:normal;white-space:nowrap;transform:scaleX(0.9900);transform-origin:0.68px 0;-webkit-text-stroke:0.22px #fff;">3,208.60</div>
<div style="position:absolute;left:905.29px;top:298.35px;font-size:22.5px;line-height:22.5px;letter-spacing:-0.25px;color:#333;font-weight:normal;white-space:nowrap;transform:scaleX(0.9900);transform-origin:0.68px 0;-webkit-text-stroke:0.22px #fff;">0.00</div>
<div style="position:absolute;left:1040.23px;top:298.35px;font-size:22.5px;line-height:22.5px;letter-spacing:-0.25px;color:#333;font-weight:normal;white-space:nowrap;transform:scaleX(0.9900);transform-origin:0.68px 0;-webkit-text-stroke:0.22px #fff;">3,208.60</div>
<div style="position:absolute;left:1215.73px;top:298.35px;font-size:22.5px;line-height:22.5px;letter-spacing:-0.25px;color:#333;font-weight:normal;white-space:nowrap;transform:scaleX(0.9900);transform-origin:0.68px 0;-webkit-text-stroke:0.22px #fff;">3,212.10</div>
<div style="position:absolute;left:1422.74px;top:298.35px;font-size:22.5px;line-height:22.5px;letter-spacing:-0.25px;color:#333;font-weight:normal;white-space:nowrap;transform:scaleX(0.9900);transform-origin:1.57px 0;-webkit-text-stroke:0.22px #fff;">13.50</div>
<div style="position:absolute;left:1568.93px;top:298.35px;font-size:22.5px;line-height:22.5px;letter-spacing:-0.25px;color:#333;font-weight:normal;white-space:nowrap;transform:scaleX(0.9900);transform-origin:0.68px 0;-webkit-text-stroke:0.22px #fff;">3,225.60</div>
<div style="position:absolute;left:1744.62px;top:298.35px;font-size:22.5px;line-height:22.5px;letter-spacing:-0.25px;color:#333;font-weight:normal;white-space:nowrap;transform:scaleX(0.9900);transform-origin:0.68px 0;-webkit-text-stroke:0.22px #fff;">3,225.60</div>
<div style="position:absolute;left:1964.08px;top:298.35px;font-size:22.5px;line-height:22.5px;letter-spacing:-0.25px;color:#333;font-weight:normal;white-space:nowrap;transform:scaleX(0.9900);transform-origin:1.12px 0;-webkit-text-stroke:0.22px #fff;">6.70</div>
<div style="position:absolute;left:2097.72px;top:298.35px;font-size:22.5px;line-height:22.5px;letter-spacing:-0.25px;color:#333;font-weight:normal;white-space:nowrap;transform:scaleX(0.9900);transform-origin:0.68px 0;-webkit-text-stroke:0.22px #fff;">3,232.30</div>
<div style="position:absolute;left:2274.72px;top:298.35px;font-size:22.5px;line-height:22.5px;letter-spacing:-0.25px;color:#333;font-weight:normal;white-space:nowrap;transform:scaleX(0.9900);transform-origin:0.68px 0;-webkit-text-stroke:0.22px #fff;">3,232.40</div>
<div style="position:absolute;left:113.95px;top:339.65px;font-size:22.5px;line-height:22.5px;letter-spacing:-0.25px;color:#111;font-weight:normal;white-space:nowrap;transform:scaleX(0.8854);transform-origin:0.45px 0;-webkit-text-stroke:0.22px #fff;">TB</div>
<div style="position:absolute;left:284.19px;top:339.65px;font-size:22.5px;line-height:22.5px;letter-spacing:-0.25px;color:#111;font-weight:normal;white-space:nowrap;transform:scaleX(0.9723);transform-origin:1.80px 0;-webkit-text-stroke:0.22px #fff;">DTS-08</div>
<div style="position:absolute;left:283.99px;top:359.90px;width:75.22px;height:2.00px;background:#111;"></div>
<div style="position:absolute;left:472.00px;top:339.65px;font-size:22.5px;line-height:22.5px;letter-spacing:-0.25px;color:#111;font-weight:normal;white-space:nowrap;transform:scaleX(0.9415);transform-origin:0.90px 0;-webkit-text-stroke:0.22px #fff;">SYZ331C</div>
<div style="position:absolute;left:686.83px;top:339.65px;font-size:22.5px;line-height:22.5px;letter-spacing:-0.25px;color:#333;font-weight:normal;white-space:nowrap;transform:scaleX(0.9900);transform-origin:0.68px 0;-webkit-text-stroke:0.22px #fff;">3,144.60</div>
<div style="position:absolute;left:905.29px;top:339.65px;font-size:22.5px;line-height:22.5px;letter-spacing:-0.25px;color:#333;font-weight:normal;white-space:nowrap;transform:scaleX(0.9900);transform-origin:0.68px 0;-webkit-text-stroke:0.22px #fff;">0.00</div>
<div style="position:absolute;left:1040.23px;top:339.65px;font-size:22.5px;line-height:22.5px;letter-spacing:-0.25px;color:#333;font-weight:normal;white-space:nowrap;transform:scaleX(0.9900);transform-origin:0.68px 0;-webkit-text-stroke:0.22px #fff;">3,144.60</div>
<div style="position:absolute;left:1215.73px;top:339.65px;font-size:22.5px;line-height:22.5px;letter-spacing:-0.25px;color:#333;font-weight:normal;white-space:nowrap;transform:scaleX(0.9900);transform-origin:0.68px 0;-webkit-text-stroke:0.22px #fff;">3,144.60</div>
<div style="position:absolute;left:1434.89px;top:339.65px;font-size:22.5px;line-height:22.5px;letter-spacing:-0.25px;color:#333;font-weight:normal;white-space:nowrap;transform:scaleX(0.9900);transform-origin:0.90px 0;-webkit-text-stroke:0.22px #fff;">9.00</div>
<div style="position:absolute;left:1568.93px;top:339.65px;font-size:22.5px;line-height:22.5px;letter-spacing:-0.25px;color:#333;font-weight:normal;white-space:nowrap;transform:scaleX(0.9900);transform-origin:0.68px 0;-webkit-text-stroke:0.22px #fff;">3,155.20</div>
<div style="position:absolute;left:1744.62px;top:339.65px;font-size:22.5px;line-height:22.5px;letter-spacing:-0.25px;color:#333;font-weight:normal;white-space:nowrap;transform:scaleX(0.9900);transform-origin:0.68px 0;-webkit-text-stroke:0.22px #fff;">3,155.30</div>
<div style="position:absolute;left:1964.08px;top:339.65px;font-size:22.5px;line-height:22.5px;letter-spacing:-0.25px;color:#333;font-weight:normal;white-space:nowrap;transform:scaleX(0.9900);transform-origin:1.12px 0;-webkit-text-stroke:0.22px #fff;">6.80</div>
<div style="position:absolute;left:2097.72px;top:339.65px;font-size:22.5px;line-height:22.5px;letter-spacing:-0.25px;color:#333;font-weight:normal;white-space:nowrap;transform:scaleX(0.9900);transform-origin:0.68px 0;-webkit-text-stroke:0.22px #fff;">3,162.10</div>
<div style="position:absolute;left:2274.72px;top:339.65px;font-size:22.5px;line-height:22.5px;letter-spacing:-0.25px;color:#333;font-weight:normal;white-space:nowrap;transform:scaleX(0.9900);transform-origin:0.68px 0;-webkit-text-stroke:0.22px #fff;">3,162.10</div>
<div style="position:absolute;left:113.95px;top:380.95px;font-size:22.5px;line-height:22.5px;letter-spacing:-0.25px;color:#111;font-weight:normal;white-space:nowrap;transform:scaleX(0.8854);transform-origin:0.45px 0;-webkit-text-stroke:0.22px #fff;">TB</div>
<div style="position:absolute;left:284.30px;top:380.95px;font-size:22.5px;line-height:22.5px;letter-spacing:-0.25px;color:#111;font-weight:normal;white-space:nowrap;transform:scaleX(0.9723);transform-origin:1.80px 0;-webkit-text-stroke:0.22px #fff;">DTS-09</div>
<div style="position:absolute;left:284.10px;top:401.20px;width:75.00px;height:2.00px;background:#111;"></div>
<div style="position:absolute;left:472.00px;top:380.95px;font-size:22.5px;line-height:22.5px;letter-spacing:-0.25px;color:#111;font-weight:normal;white-space:nowrap;transform:scaleX(0.9415);transform-origin:0.90px 0;-webkit-text-stroke:0.22px #fff;">SYZ331C</div>
<div style="position:absolute;left:686.82px;top:380.95px;font-size:22.5px;line-height:22.5px;letter-spacing:-0.25px;color:#333;font-weight:normal;white-space:nowrap;transform:scaleX(0.9900);transform-origin:1.12px 0;-webkit-text-stroke:0.22px #fff;">2,994.00</div>
<div style="position:absolute;left:905.29px;top:380.95px;font-size:22.5px;line-height:22.5px;letter-spacing:-0.25px;color:#333;font-weight:normal;white-space:nowrap;transform:scaleX(0.9900);transform-origin:0.68px 0;-webkit-text-stroke:0.22px #fff;">0.00</div>
<div style="position:absolute;left:1040.22px;top:380.95px;font-size:22.5px;line-height:22.5px;letter-spacing:-0.25px;color:#333;font-weight:normal;white-space:nowrap;transform:scaleX(0.9900);transform-origin:1.12px 0;-webkit-text-stroke:0.22px #fff;">2,994.00</div>
<div style="position:absolute;left:1215.72px;top:380.95px;font-size:22.5px;line-height:22.5px;letter-spacing:-0.25px;color:#333;font-weight:normal;white-space:nowrap;transform:scaleX(0.9900);transform-origin:1.12px 0;-webkit-text-stroke:0.22px #fff;">2,994.00</div>
<div style="position:absolute;left:1434.89px;top:380.95px;font-size:22.5px;line-height:22.5px;letter-spacing:-0.25px;color:#333;font-weight:normal;white-space:nowrap;transform:scaleX(0.9900);transform-origin:0.68px 0;-webkit-text-stroke:0.22px #fff;">0.00</div>
<div style="position:absolute;left:1568.92px;top:380.95px;font-size:22.5px;line-height:22.5px;letter-spacing:-0.25px;color:#333;font-weight:normal;white-space:nowrap;transform:scaleX(0.9900);transform-origin:1.12px 0;-webkit-text-stroke:0.22px #fff;">2,994.00</div>
<div style="position:absolute;left:1744.62px;top:380.95px;font-size:22.5px;line-height:22.5px;letter-spacing:-0.25px;color:#333;font-weight:normal;white-space:nowrap;transform:scaleX(0.9900);transform-origin:1.12px 0;-webkit-text-stroke:0.22px #fff;">2,994.00</div>
<div style="position:absolute;left:1964.09px;top:380.95px;font-size:22.5px;line-height:22.5px;letter-spacing:-0.25px;color:#333;font-weight:normal;white-space:nowrap;transform:scaleX(0.9900);transform-origin:0.68px 0;-webkit-text-stroke:0.22px #fff;">0.00</div>
<div style="position:absolute;left:2097.72px;top:380.95px;font-size:22.5px;line-height:22.5px;letter-spacing:-0.25px;color:#333;font-weight:normal;white-space:nowrap;transform:scaleX(0.9900);transform-origin:1.12px 0;-webkit-text-stroke:0.22px #fff;">2,994.00</div>
<div style="position:absolute;left:2274.72px;top:380.95px;font-size:22.5px;line-height:22.5px;letter-spacing:-0.25px;color:#333;font-weight:normal;white-space:nowrap;transform:scaleX(0.9900);transform-origin:1.12px 0;-webkit-text-stroke:0.22px #fff;">2,994.00</div>
<div style="position:absolute;left:113.95px;top:422.25px;font-size:22.5px;line-height:22.5px;letter-spacing:-0.25px;color:#111;font-weight:normal;white-space:nowrap;transform:scaleX(0.8854);transform-origin:0.45px 0;-webkit-text-stroke:0.22px #fff;">TB</div>
<div style="position:absolute;left:284.19px;top:422.25px;font-size:22.5px;line-height:22.5px;letter-spacing:-0.25px;color:#111;font-weight:normal;white-space:nowrap;transform:scaleX(0.9723);transform-origin:1.80px 0;-webkit-text-stroke:0.22px #fff;">DTS-10</div>
<div style="position:absolute;left:283.99px;top:442.50px;width:75.22px;height:2.00px;background:#111;"></div>
<div style="position:absolute;left:472.00px;top:422.25px;font-size:22.5px;line-height:22.5px;letter-spacing:-0.25px;color:#111;font-weight:normal;white-space:nowrap;transform:scaleX(0.9415);transform-origin:0.90px 0;-webkit-text-stroke:0.22px #fff;">SYZ331C</div>
<div style="position:absolute;left:686.83px;top:422.25px;font-size:22.5px;line-height:22.5px;letter-spacing:-0.25px;color:#333;font-weight:normal;white-space:nowrap;transform:scaleX(0.9900);transform-origin:0.68px 0;-webkit-text-stroke:0.22px #fff;">3,097.80</div>
<div style="position:absolute;left:905.29px;top:422.25px;font-size:22.5px;line-height:22.5px;letter-spacing:-0.25px;color:#333;font-weight:normal;white-space:nowrap;transform:scaleX(0.9900);transform-origin:0.68px 0;-webkit-text-stroke:0.22px #fff;">0.00</div>
<div style="position:absolute;left:1040.23px;top:422.25px;font-size:22.5px;line-height:22.5px;letter-spacing:-0.25px;color:#333;font-weight:normal;white-space:nowrap;transform:scaleX(0.9900);transform-origin:0.68px 0;-webkit-text-stroke:0.22px #fff;">3,097.80</div>
<div style="position:absolute;left:1215.73px;top:422.25px;font-size:22.5px;line-height:22.5px;letter-spacing:-0.25px;color:#333;font-weight:normal;white-space:nowrap;transform:scaleX(0.9900);transform-origin:0.68px 0;-webkit-text-stroke:0.22px #fff;">3,099.50</div>
<div style="position:absolute;left:1422.74px;top:422.25px;font-size:22.5px;line-height:22.5px;letter-spacing:-0.25px;color:#333;font-weight:normal;white-space:nowrap;transform:scaleX(0.9900);transform-origin:1.57px 0;-webkit-text-stroke:0.22px #fff;">12.40</div>
<div style="position:absolute;left:1572.23px;top:422.25px;font-size:22.5px;line-height:22.5px;letter-spacing:-0.25px;color:#333;font-weight:normal;white-space:nowrap;transform:scaleX(0.9900);transform-origin:0.68px 0;-webkit-text-stroke:0.22px #fff;">3,111.90</div>
<div style="position:absolute;left:1746.28px;top:422.25px;font-size:22.5px;line-height:22.5px;letter-spacing:-0.25px;color:#333;font-weight:normal;white-space:nowrap;transform:scaleX(0.9900);transform-origin:0.68px 0;-webkit-text-stroke:0.22px #fff;">3,112.00</div>
<div style="position:absolute;left:1964.08px;top:422.25px;font-size:22.5px;line-height:22.5px;letter-spacing:-0.25px;color:#333;font-weight:normal;white-space:nowrap;transform:scaleX(0.9900);transform-origin:1.12px 0;-webkit-text-stroke:0.22px #fff;">6.70</div>
<div style="position:absolute;left:2099.38px;top:422.25px;font-size:22.5px;line-height:22.5px;letter-spacing:-0.25px;color:#333;font-weight:normal;white-space:nowrap;transform:scaleX(0.9900);transform-origin:0.68px 0;-webkit-text-stroke:0.22px #fff;">3,118.70</div>
<div style="position:absolute;left:2276.38px;top:422.25px;font-size:22.5px;line-height:22.5px;letter-spacing:-0.25px;color:#333;font-weight:normal;white-space:nowrap;transform:scaleX(0.9900);transform-origin:0.68px 0;-webkit-text-stroke:0.22px #fff;">3,118.70</div>
<div style="position:absolute;left:113.95px;top:463.55px;font-size:22.5px;line-height:22.5px;letter-spacing:-0.25px;color:#111;font-weight:normal;white-space:nowrap;transform:scaleX(0.8854);transform-origin:0.45px 0;-webkit-text-stroke:0.22px #fff;">TB</div>
<div style="position:absolute;left:285.11px;top:463.55px;font-size:22.5px;line-height:22.5px;letter-spacing:-0.25px;color:#111;font-weight:normal;white-space:nowrap;transform:scaleX(0.9723);transform-origin:1.80px 0;-webkit-text-stroke:0.22px #fff;">DTS-11</div>
<div style="position:absolute;left:284.91px;top:483.80px;width:73.38px;height:2.00px;background:#111;"></div>
<div style="position:absolute;left:472.00px;top:463.55px;font-size:22.5px;line-height:22.5px;letter-spacing:-0.25px;color:#111;font-weight:normal;white-space:nowrap;transform:scaleX(0.9415);transform-origin:0.90px 0;-webkit-text-stroke:0.22px #fff;">SYZ331C</div>
<div style="position:absolute;left:686.82px;top:463.55px;font-size:22.5px;line-height:22.5px;letter-spacing:-0.25px;color:#333;font-weight:normal;white-space:nowrap;transform:scaleX(0.9900);transform-origin:1.12px 0;-webkit-text-stroke:0.22px #fff;">2,770.10</div>
<div style="position:absolute;left:905.29px;top:463.55px;font-size:22.5px;line-height:22.5px;letter-spacing:-0.25px;color:#333;font-weight:normal;white-space:nowrap;transform:scaleX(0.9900);transform-origin:0.68px 0;-webkit-text-stroke:0.22px #fff;">0.00</div>
<div style="position:absolute;left:1040.22px;top:463.55px;font-size:22.5px;line-height:22.5px;letter-spacing:-0.25px;color:#333;font-weight:normal;white-space:nowrap;transform:scaleX(0.9900);transform-origin:1.12px 0;-webkit-text-stroke:0.22px #fff;">2,770.10</div>
<div style="position:absolute;left:1215.72px;top:463.55px;font-size:22.5px;line-height:22.5px;letter-spacing:-0.25px;color:#333;font-weight:normal;white-space:nowrap;transform:scaleX(0.9900);transform-origin:1.12px 0;-webkit-text-stroke:0.22px #fff;">2,770.10</div>
<div style="position:absolute;left:1434.88px;top:463.55px;font-size:22.5px;line-height:22.5px;letter-spacing:-0.25px;color:#333;font-weight:normal;white-space:nowrap;transform:scaleX(0.9900);transform-origin:1.12px 0;-webkit-text-stroke:0.22px #fff;">6.90</div>
<div style="position:absolute;left:1568.92px;top:463.55px;font-size:22.5px;line-height:22.5px;letter-spacing:-0.25px;color:#333;font-weight:normal;white-space:nowrap;transform:scaleX(0.9900);transform-origin:1.12px 0;-webkit-text-stroke:0.22px #fff;">2,778.70</div>
<div style="position:absolute;left:1744.62px;top:463.55px;font-size:22.5px;line-height:22.5px;letter-spacing:-0.25px;color:#333;font-weight:normal;white-space:nowrap;transform:scaleX(0.9900);transform-origin:1.12px 0;-webkit-text-stroke:0.22px #fff;">2,778.80</div>
<div style="position:absolute;left:1964.08px;top:463.55px;font-size:22.5px;line-height:22.5px;letter-spacing:-0.25px;color:#333;font-weight:normal;white-space:nowrap;transform:scaleX(0.9900);transform-origin:1.12px 0;-webkit-text-stroke:0.22px #fff;">6.30</div>
<div style="position:absolute;left:2097.72px;top:463.55px;font-size:22.5px;line-height:22.5px;letter-spacing:-0.25px;color:#333;font-weight:normal;white-space:nowrap;transform:scaleX(0.9900);transform-origin:1.12px 0;-webkit-text-stroke:0.22px #fff;">2,785.10</div>
<div style="position:absolute;left:2274.72px;top:463.55px;font-size:22.5px;line-height:22.5px;letter-spacing:-0.25px;color:#333;font-weight:normal;white-space:nowrap;transform:scaleX(0.9900);transform-origin:1.12px 0;-webkit-text-stroke:0.22px #fff;">2,785.10</div>
<div style="position:absolute;left:113.95px;top:504.85px;font-size:22.5px;line-height:22.5px;letter-spacing:-0.25px;color:#111;font-weight:normal;white-space:nowrap;transform:scaleX(0.8854);transform-origin:0.45px 0;-webkit-text-stroke:0.22px #fff;">TB</div>
<div style="position:absolute;left:284.30px;top:504.85px;font-size:22.5px;line-height:22.5px;letter-spacing:-0.25px;color:#111;font-weight:normal;white-space:nowrap;transform:scaleX(0.9723);transform-origin:1.80px 0;-webkit-text-stroke:0.22px #fff;">DTS-12</div>
<div style="position:absolute;left:284.10px;top:525.10px;width:75.00px;height:2.00px;background:#111;"></div>
<div style="position:absolute;left:472.00px;top:504.85px;font-size:22.5px;line-height:22.5px;letter-spacing:-0.25px;color:#111;font-weight:normal;white-space:nowrap;transform:scaleX(0.9415);transform-origin:0.90px 0;-webkit-text-stroke:0.22px #fff;">SYZ331C</div>
<div style="position:absolute;left:686.83px;top:504.85px;font-size:22.5px;line-height:22.5px;letter-spacing:-0.25px;color:#333;font-weight:normal;white-space:nowrap;transform:scaleX(0.9900);transform-origin:0.68px 0;-webkit-text-stroke:0.22px #fff;">3,091.80</div>
<div style="position:absolute;left:905.29px;top:504.85px;font-size:22.5px;line-height:22.5px;letter-spacing:-0.25px;color:#333;font-weight:normal;white-space:nowrap;transform:scaleX(0.9900);transform-origin:0.68px 0;-webkit-text-stroke:0.22px #fff;">0.00</div>
<div style="position:absolute;left:1040.23px;top:504.85px;font-size:22.5px;line-height:22.5px;letter-spacing:-0.25px;color:#333;font-weight:normal;white-space:nowrap;transform:scaleX(0.9900);transform-origin:0.68px 0;-webkit-text-stroke:0.22px #fff;">3,091.80</div>
<div style="position:absolute;left:1215.73px;top:504.85px;font-size:22.5px;line-height:22.5px;letter-spacing:-0.25px;color:#333;font-weight:normal;white-space:nowrap;transform:scaleX(0.9900);transform-origin:0.68px 0;-webkit-text-stroke:0.22px #fff;">3,091.80</div>
<div style="position:absolute;left:1434.88px;top:504.85px;font-size:22.5px;line-height:22.5px;letter-spacing:-0.25px;color:#333;font-weight:normal;white-space:nowrap;transform:scaleX(0.9900);transform-origin:1.12px 0;-webkit-text-stroke:0.22px #fff;">6.70</div>
<div style="position:absolute;left:1568.93px;top:504.85px;font-size:22.5px;line-height:22.5px;letter-spacing:-0.25px;color:#333;font-weight:normal;white-space:nowrap;transform:scaleX(0.9900);transform-origin:0.68px 0;-webkit-text-stroke:0.22px #fff;">3,100.50</div>
<div style="position:absolute;left:1744.62px;top:504.85px;font-size:22.5px;line-height:22.5px;letter-spacing:-0.25px;color:#333;font-weight:normal;white-space:nowrap;transform:scaleX(0.9900);transform-origin:0.68px 0;-webkit-text-stroke:0.22px #fff;">3,100.70</div>
<div style="position:absolute;left:1964.08px;top:504.85px;font-size:22.5px;line-height:22.5px;letter-spacing:-0.25px;color:#333;font-weight:normal;white-space:nowrap;transform:scaleX(0.9900);transform-origin:1.12px 0;-webkit-text-stroke:0.22px #fff;">6.60</div>
<div style="position:absolute;left:2097.72px;top:504.85px;font-size:22.5px;line-height:22.5px;letter-spacing:-0.25px;color:#333;font-weight:normal;white-space:nowrap;transform:scaleX(0.9900);transform-origin:0.68px 0;-webkit-text-stroke:0.22px #fff;">3,107.30</div>
<div style="position:absolute;left:2274.72px;top:504.85px;font-size:22.5px;line-height:22.5px;letter-spacing:-0.25px;color:#333;font-weight:normal;white-space:nowrap;transform:scaleX(0.9900);transform-origin:0.68px 0;-webkit-text-stroke:0.22px #fff;">3,107.40</div>
<div style="position:absolute;left:113.95px;top:546.15px;font-size:22.5px;line-height:22.5px;letter-spacing:-0.25px;color:#111;font-weight:normal;white-space:nowrap;transform:scaleX(0.8854);transform-origin:0.45px 0;-webkit-text-stroke:0.22px #fff;">TB</div>
<div style="position:absolute;left:284.19px;top:546.15px;font-size:22.5px;line-height:22.5px;letter-spacing:-0.25px;color:#111;font-weight:normal;white-space:nowrap;transform:scaleX(0.9723);transform-origin:1.80px 0;-webkit-text-stroke:0.22px #fff;">DTS-13</div>
<div style="position:absolute;left:283.99px;top:566.40px;width:75.22px;height:2.00px;background:#111;"></div>
<div style="position:absolute;left:472.00px;top:546.15px;font-size:22.5px;line-height:22.5px;letter-spacing:-0.25px;color:#111;font-weight:normal;white-space:nowrap;transform:scaleX(0.9415);transform-origin:0.90px 0;-webkit-text-stroke:0.22px #fff;">SYZ331C</div>
<div style="position:absolute;left:686.82px;top:546.15px;font-size:22.5px;line-height:22.5px;letter-spacing:-0.25px;color:#333;font-weight:normal;white-space:nowrap;transform:scaleX(0.9900);transform-origin:1.12px 0;-webkit-text-stroke:0.22px #fff;">2,680.20</div>
<div style="position:absolute;left:905.29px;top:546.15px;font-size:22.5px;line-height:22.5px;letter-spacing:-0.25px;color:#333;font-weight:normal;white-space:nowrap;transform:scaleX(0.9900);transform-origin:0.68px 0;-webkit-text-stroke:0.22px #fff;">0.00</div>
<div style="position:absolute;left:1040.22px;top:546.15px;font-size:22.5px;line-height:22.5px;letter-spacing:-0.25px;color:#333;font-weight:normal;white-space:nowrap;transform:scaleX(0.9900);transform-origin:1.12px 0;-webkit-text-stroke:0.22px #fff;">2,680.20</div>
<div style="position:absolute;left:1215.72px;top:546.15px;font-size:22.5px;line-height:22.5px;letter-spacing:-0.25px;color:#333;font-weight:normal;white-space:nowrap;transform:scaleX(0.9900);transform-origin:1.12px 0;-webkit-text-stroke:0.22px #fff;">2,680.20</div>
<div style="position:absolute;left:1434.89px;top:546.15px;font-size:22.5px;line-height:22.5px;letter-spacing:-0.25px;color:#333;font-weight:normal;white-space:nowrap;transform:scaleX(0.9900);transform-origin:0.68px 0;-webkit-text-stroke:0.22px #fff;">0.00</div>
<div style="position:absolute;left:1568.92px;top:546.15px;font-size:22.5px;line-height:22.5px;letter-spacing:-0.25px;color:#333;font-weight:normal;white-space:nowrap;transform:scaleX(0.9900);transform-origin:1.12px 0;-webkit-text-stroke:0.22px #fff;">2,680.20</div>
<div style="position:absolute;left:1744.62px;top:546.15px;font-size:22.5px;line-height:22.5px;letter-spacing:-0.25px;color:#333;font-weight:normal;white-space:nowrap;transform:scaleX(0.9900);transform-origin:1.12px 0;-webkit-text-stroke:0.22px #fff;">2,680.20</div>
<div style="position:absolute;left:1964.09px;top:546.15px;font-size:22.5px;line-height:22.5px;letter-spacing:-0.25px;color:#333;font-weight:normal;white-space:nowrap;transform:scaleX(0.9900);transform-origin:0.68px 0;-webkit-text-stroke:0.22px #fff;">0.00</div>
<div style="position:absolute;left:2097.72px;top:546.15px;font-size:22.5px;line-height:22.5px;letter-spacing:-0.25px;color:#333;font-weight:normal;white-space:nowrap;transform:scaleX(0.9900);transform-origin:1.12px 0;-webkit-text-stroke:0.22px #fff;">2,680.20</div>
<div style="position:absolute;left:2274.72px;top:546.15px;font-size:22.5px;line-height:22.5px;letter-spacing:-0.25px;color:#333;font-weight:normal;white-space:nowrap;transform:scaleX(0.9900);transform-origin:1.12px 0;-webkit-text-stroke:0.22px #fff;">2,680.20</div>
<div style="position:absolute;left:113.95px;top:587.45px;font-size:22.5px;line-height:22.5px;letter-spacing:-0.25px;color:#111;font-weight:normal;white-space:nowrap;transform:scaleX(0.8854);transform-origin:0.45px 0;-webkit-text-stroke:0.22px #fff;">TB</div>
<div style="position:absolute;left:284.08px;top:587.45px;font-size:22.5px;line-height:22.5px;letter-spacing:-0.25px;color:#111;font-weight:normal;white-space:nowrap;transform:scaleX(0.9723);transform-origin:1.80px 0;-webkit-text-stroke:0.22px #fff;">DTS-14</div>
<div style="position:absolute;left:283.88px;top:607.70px;width:75.44px;height:2.00px;background:#111;"></div>
<div style="position:absolute;left:472.00px;top:587.45px;font-size:22.5px;line-height:22.5px;letter-spacing:-0.25px;color:#111;font-weight:normal;white-space:nowrap;transform:scaleX(0.9415);transform-origin:0.90px 0;-webkit-text-stroke:0.22px #fff;">SYZ331C</div>
<div style="position:absolute;left:686.82px;top:587.45px;font-size:22.5px;line-height:22.5px;letter-spacing:-0.25px;color:#333;font-weight:normal;white-space:nowrap;transform:scaleX(0.9900);transform-origin:1.57px 0;-webkit-text-stroke:0.22px #fff;">1,634.70</div>
<div style="position:absolute;left:905.29px;top:587.45px;font-size:22.5px;line-height:22.5px;letter-spacing:-0.25px;color:#333;font-weight:normal;white-space:nowrap;transform:scaleX(0.9900);transform-origin:0.68px 0;-webkit-text-stroke:0.22px #fff;">0.00</div>
<div style="position:absolute;left:1040.22px;top:587.45px;font-size:22.5px;line-height:22.5px;letter-spacing:-0.25px;color:#333;font-weight:normal;white-space:nowrap;transform:scaleX(0.9900);transform-origin:1.57px 0;-webkit-text-stroke:0.22px #fff;">1,634.70</div>
<div style="position:absolute;left:1215.72px;top:587.45px;font-size:22.5px;line-height:22.5px;letter-spacing:-0.25px;color:#333;font-weight:normal;white-space:nowrap;transform:scaleX(0.9900);transform-origin:1.57px 0;-webkit-text-stroke:0.22px #fff;">1,636.80</div>
<div style="position:absolute;left:1422.74px;top:587.45px;font-size:22.5px;line-height:22.5px;letter-spacing:-0.25px;color:#333;font-weight:normal;white-space:nowrap;transform:scaleX(0.9900);transform-origin:1.57px 0;-webkit-text-stroke:0.22px #fff;">14.20</div>
<div style="position:absolute;left:1568.92px;top:587.45px;font-size:22.5px;line-height:22.5px;letter-spacing:-0.25px;color:#333;font-weight:normal;white-space:nowrap;transform:scaleX(0.9900);transform-origin:1.57px 0;-webkit-text-stroke:0.22px #fff;">1,651.20</div>
<div style="position:absolute;left:1744.62px;top:587.45px;font-size:22.5px;line-height:22.5px;letter-spacing:-0.25px;color:#333;font-weight:normal;white-space:nowrap;transform:scaleX(0.9900);transform-origin:1.57px 0;-webkit-text-stroke:0.22px #fff;">1,651.20</div>
<div style="position:absolute;left:1964.08px;top:587.45px;font-size:22.5px;line-height:22.5px;letter-spacing:-0.25px;color:#333;font-weight:normal;white-space:nowrap;transform:scaleX(0.9900);transform-origin:1.12px 0;-webkit-text-stroke:0.22px #fff;">6.90</div>
<div style="position:absolute;left:2097.72px;top:587.45px;font-size:22.5px;line-height:22.5px;letter-spacing:-0.25px;color:#333;font-weight:normal;white-space:nowrap;transform:scaleX(0.9900);transform-origin:1.57px 0;-webkit-text-stroke:0.22px #fff;">1,658.10</div>
<div style="position:absolute;left:2274.72px;top:587.45px;font-size:22.5px;line-height:22.5px;letter-spacing:-0.25px;color:#333;font-weight:normal;white-space:nowrap;transform:scaleX(0.9900);transform-origin:1.57px 0;-webkit-text-stroke:0.22px #fff;">1,658.10</div>
<div style="position:absolute;left:113.95px;top:628.75px;font-size:22.5px;line-height:22.5px;letter-spacing:-0.25px;color:#111;font-weight:normal;white-space:nowrap;transform:scaleX(0.8854);transform-origin:0.45px 0;-webkit-text-stroke:0.22px #fff;">TB</div>
<div style="position:absolute;left:284.19px;top:628.75px;font-size:22.5px;line-height:22.5px;letter-spacing:-0.25px;color:#111;font-weight:normal;white-space:nowrap;transform:scaleX(0.9723);transform-origin:1.80px 0;-webkit-text-stroke:0.22px #fff;">DTS-15</div>
<div style="position:absolute;left:283.99px;top:649.00px;width:75.22px;height:2.00px;background:#111;"></div>
<div style="position:absolute;left:472.00px;top:628.75px;font-size:22.5px;line-height:22.5px;letter-spacing:-0.25px;color:#111;font-weight:normal;white-space:nowrap;transform:scaleX(0.9415);transform-origin:0.90px 0;-webkit-text-stroke:0.22px #fff;">SYZ331C</div>
<div style="position:absolute;left:686.83px;top:628.75px;font-size:22.5px;line-height:22.5px;letter-spacing:-0.25px;color:#333;font-weight:normal;white-space:nowrap;transform:scaleX(0.9900);transform-origin:0.68px 0;-webkit-text-stroke:0.22px #fff;">3,071.70</div>
<div style="position:absolute;left:905.29px;top:628.75px;font-size:22.5px;line-height:22.5px;letter-spacing:-0.25px;color:#333;font-weight:normal;white-space:nowrap;transform:scaleX(0.9900);transform-origin:0.68px 0;-webkit-text-stroke:0.22px #fff;">0.00</div>
<div style="position:absolute;left:1040.23px;top:628.75px;font-size:22.5px;line-height:22.5px;letter-spacing:-0.25px;color:#333;font-weight:normal;white-space:nowrap;transform:scaleX(0.9900);transform-origin:0.68px 0;-webkit-text-stroke:0.22px #fff;">3,071.70</div>
<div style="position:absolute;left:1215.73px;top:628.75px;font-size:22.5px;line-height:22.5px;letter-spacing:-0.25px;color:#333;font-weight:normal;white-space:nowrap;transform:scaleX(0.9900);transform-origin:0.68px 0;-webkit-text-stroke:0.22px #fff;">3,078.00</div>
<div style="position:absolute;left:1434.88px;top:628.75px;font-size:22.5px;line-height:22.5px;letter-spacing:-0.25px;color:#333;font-weight:normal;white-space:nowrap;transform:scaleX(0.9900);transform-origin:1.12px 0;-webkit-text-stroke:0.22px #fff;">2.50</div>
<div style="position:absolute;left:1568.93px;top:628.75px;font-size:22.5px;line-height:22.5px;letter-spacing:-0.25px;color:#333;font-weight:normal;white-space:nowrap;transform:scaleX(0.9900);transform-origin:0.68px 0;-webkit-text-stroke:0.22px #fff;">3,080.50</div>
<div style="position:absolute;left:1744.62px;top:628.75px;font-size:22.5px;line-height:22.5px;letter-spacing:-0.25px;color:#333;font-weight:normal;white-space:nowrap;transform:scaleX(0.9900);transform-origin:0.68px 0;-webkit-text-stroke:0.22px #fff;">3,080.50</div>
<div style="position:absolute;left:1964.09px;top:628.75px;font-size:22.5px;line-height:22.5px;letter-spacing:-0.25px;color:#333;font-weight:normal;white-space:nowrap;transform:scaleX(0.9900);transform-origin:0.68px 0;-webkit-text-stroke:0.22px #fff;">0.00</div>
<div style="position:absolute;left:2097.72px;top:628.75px;font-size:22.5px;line-height:22.5px;letter-spacing:-0.25px;color:#333;font-weight:normal;white-space:nowrap;transform:scaleX(0.9900);transform-origin:0.68px 0;-webkit-text-stroke:0.22px #fff;">3,080.50</div>
<div style="position:absolute;left:2274.72px;top:628.75px;font-size:22.5px;line-height:22.5px;letter-spacing:-0.25px;color:#333;font-weight:normal;white-space:nowrap;transform:scaleX(0.9900);transform-origin:0.68px 0;-webkit-text-stroke:0.22px #fff;">3,080.50</div>
<div style="position:absolute;left:113.95px;top:670.05px;font-size:22.5px;line-height:22.5px;letter-spacing:-0.25px;color:#111;font-weight:normal;white-space:nowrap;transform:scaleX(0.8854);transform-origin:0.45px 0;-webkit-text-stroke:0.22px #fff;">TB</div>
<div style="position:absolute;left:284.19px;top:670.05px;font-size:22.5px;line-height:22.5px;letter-spacing:-0.25px;color:#111;font-weight:normal;white-space:nowrap;transform:scaleX(0.9723);transform-origin:1.80px 0;-webkit-text-stroke:0.22px #fff;">DTS-16</div>
<div style="position:absolute;left:283.99px;top:690.30px;width:75.22px;height:2.00px;background:#111;"></div>
<div style="position:absolute;left:472.00px;top:670.05px;font-size:22.5px;line-height:22.5px;letter-spacing:-0.25px;color:#111;font-weight:normal;white-space:nowrap;transform:scaleX(0.9415);transform-origin:0.90px 0;-webkit-text-stroke:0.22px #fff;">SYZ331C</div>
<div style="position:absolute;left:686.82px;top:670.05px;font-size:22.5px;line-height:22.5px;letter-spacing:-0.25px;color:#333;font-weight:normal;white-space:nowrap;transform:scaleX(0.9900);transform-origin:1.57px 0;-webkit-text-stroke:0.22px #fff;">1,616.50</div>
<div style="position:absolute;left:905.29px;top:670.05px;font-size:22.5px;line-height:22.5px;letter-spacing:-0.25px;color:#333;font-weight:normal;white-space:nowrap;transform:scaleX(0.9900);transform-origin:0.68px 0;-webkit-text-stroke:0.22px #fff;">0.00</div>
<div style="position:absolute;left:1040.22px;top:670.05px;font-size:22.5px;line-height:22.5px;letter-spacing:-0.25px;color:#333;font-weight:normal;white-space:nowrap;transform:scaleX(0.9900);transform-origin:1.57px 0;-webkit-text-stroke:0.22px #fff;">1,616.50</div>
<div style="position:absolute;left:1215.72px;top:670.05px;font-size:22.5px;line-height:22.5px;letter-spacing:-0.25px;color:#333;font-weight:normal;white-space:nowrap;transform:scaleX(0.9900);transform-origin:1.57px 0;-webkit-text-stroke:0.22px #fff;">1,617.30</div>
<div style="position:absolute;left:1422.74px;top:670.05px;font-size:22.5px;line-height:22.5px;letter-spacing:-0.25px;color:#333;font-weight:normal;white-space:nowrap;transform:scaleX(0.9900);transform-origin:1.57px 0;-webkit-text-stroke:0.22px #fff;">14.50</div>
<div style="position:absolute;left:1568.92px;top:670.05px;font-size:22.5px;line-height:22.5px;letter-spacing:-0.25px;color:#333;font-weight:normal;white-space:nowrap;transform:scaleX(0.9900);transform-origin:1.57px 0;-webkit-text-stroke:0.22px #fff;">1,631.90</div>
<div style="position:absolute;left:1744.62px;top:670.05px;font-size:22.5px;line-height:22.5px;letter-spacing:-0.25px;color:#333;font-weight:normal;white-space:nowrap;transform:scaleX(0.9900);transform-origin:1.57px 0;-webkit-text-stroke:0.22px #fff;">1,631.90</div>
<div style="position:absolute;left:1964.08px;top:670.05px;font-size:22.5px;line-height:22.5px;letter-spacing:-0.25px;color:#333;font-weight:normal;white-space:nowrap;transform:scaleX(0.9900);transform-origin:1.12px 0;-webkit-text-stroke:0.22px #fff;">6.30</div>
<div style="position:absolute;left:2097.72px;top:670.05px;font-size:22.5px;line-height:22.5px;letter-spacing:-0.25px;color:#333;font-weight:normal;white-space:nowrap;transform:scaleX(0.9900);transform-origin:1.57px 0;-webkit-text-stroke:0.22px #fff;">1,638.20</div>
<div style="position:absolute;left:2274.72px;top:670.05px;font-size:22.5px;line-height:22.5px;letter-spacing:-0.25px;color:#333;font-weight:normal;white-space:nowrap;transform:scaleX(0.9900);transform-origin:1.57px 0;-webkit-text-stroke:0.22px #fff;">1,638.20</div>
<div style="position:absolute;left:113.95px;top:711.35px;font-size:22.5px;line-height:22.5px;letter-spacing:-0.25px;color:#111;font-weight:normal;white-space:nowrap;transform:scaleX(0.8854);transform-origin:0.45px 0;-webkit-text-stroke:0.22px #fff;">TB</div>
<div style="position:absolute;left:284.30px;top:711.35px;font-size:22.5px;line-height:22.5px;letter-spacing:-0.25px;color:#111;font-weight:normal;white-space:nowrap;transform:scaleX(0.9723);transform-origin:1.80px 0;-webkit-text-stroke:0.22px #fff;">DTS-17</div>
<div style="position:absolute;left:284.10px;top:731.60px;width:75.00px;height:2.00px;background:#111;"></div>
<div style="position:absolute;left:472.00px;top:711.35px;font-size:22.5px;line-height:22.5px;letter-spacing:-0.25px;color:#111;font-weight:normal;white-space:nowrap;transform:scaleX(0.9415);transform-origin:0.90px 0;-webkit-text-stroke:0.22px #fff;">SYZ331C</div>
<div style="position:absolute;left:686.82px;top:711.35px;font-size:22.5px;line-height:22.5px;letter-spacing:-0.25px;color:#333;font-weight:normal;white-space:nowrap;transform:scaleX(0.9900);transform-origin:1.57px 0;-webkit-text-stroke:0.22px #fff;">1,578.10</div>
<div style="position:absolute;left:905.29px;top:711.35px;font-size:22.5px;line-height:22.5px;letter-spacing:-0.25px;color:#333;font-weight:normal;white-space:nowrap;transform:scaleX(0.9900);transform-origin:0.68px 0;-webkit-text-stroke:0.22px #fff;">0.00</div>
<div style="position:absolute;left:1040.22px;top:711.35px;font-size:22.5px;line-height:22.5px;letter-spacing:-0.25px;color:#333;font-weight:normal;white-space:nowrap;transform:scaleX(0.9900);transform-origin:1.57px 0;-webkit-text-stroke:0.22px #fff;">1,578.10</div>
<div style="position:absolute;left:1215.72px;top:711.35px;font-size:22.5px;line-height:22.5px;letter-spacing:-0.25px;color:#333;font-weight:normal;white-space:nowrap;transform:scaleX(0.9900);transform-origin:1.57px 0;-webkit-text-stroke:0.22px #fff;">1,581.10</div>
<div style="position:absolute;left:1424.39px;top:711.35px;font-size:22.5px;line-height:22.5px;letter-spacing:-0.25px;color:#333;font-weight:normal;white-space:nowrap;transform:scaleX(0.9900);transform-origin:1.57px 0;-webkit-text-stroke:0.22px #fff;">11.30</div>
<div style="position:absolute;left:1568.92px;top:711.35px;font-size:22.5px;line-height:22.5px;letter-spacing:-0.25px;color:#333;font-weight:normal;white-space:nowrap;transform:scaleX(0.9900);transform-origin:1.57px 0;-webkit-text-stroke:0.22px #fff;">1,592.40</div>
<div style="position:absolute;left:1744.62px;top:711.35px;font-size:22.5px;line-height:22.5px;letter-spacing:-0.25px;color:#333;font-weight:normal;white-space:nowrap;transform:scaleX(0.9900);transform-origin:1.57px 0;-webkit-text-stroke:0.22px #fff;">1,592.50</div>
<div style="position:absolute;left:1964.09px;top:711.35px;font-size:22.5px;line-height:22.5px;letter-spacing:-0.25px;color:#333;font-weight:normal;white-space:nowrap;transform:scaleX(0.9900);transform-origin:0.90px 0;-webkit-text-stroke:0.22px #fff;">5.10</div>
<div style="position:absolute;left:2097.72px;top:711.35px;font-size:22.5px;line-height:22.5px;letter-spacing:-0.25px;color:#333;font-weight:normal;white-space:nowrap;transform:scaleX(0.9900);transform-origin:1.57px 0;-webkit-text-stroke:0.22px #fff;">1,597.60</div>
<div style="position:absolute;left:2274.72px;top:711.35px;font-size:22.5px;line-height:22.5px;letter-spacing:-0.25px;color:#333;font-weight:normal;white-space:nowrap;transform:scaleX(0.9900);transform-origin:1.57px 0;-webkit-text-stroke:0.22px #fff;">1,597.60</div>
<div style="position:absolute;left:113.95px;top:752.65px;font-size:22.5px;line-height:22.5px;letter-spacing:-0.25px;color:#111;font-weight:normal;white-space:nowrap;transform:scaleX(0.8854);transform-origin:0.45px 0;-webkit-text-stroke:0.22px #fff;">TB</div>
<div style="position:absolute;left:284.19px;top:752.65px;font-size:22.5px;line-height:22.5px;letter-spacing:-0.25px;color:#111;font-weight:normal;white-space:nowrap;transform:scaleX(0.9723);transform-origin:1.80px 0;-webkit-text-stroke:0.22px #fff;">DTS-18</div>
<div style="position:absolute;left:283.99px;top:772.90px;width:75.22px;height:2.00px;background:#111;"></div>
<div style="position:absolute;left:472.00px;top:752.65px;font-size:22.5px;line-height:22.5px;letter-spacing:-0.25px;color:#111;font-weight:normal;white-space:nowrap;transform:scaleX(0.9415);transform-origin:0.90px 0;-webkit-text-stroke:0.22px #fff;">SYZ331C</div>
<div style="position:absolute;left:686.82px;top:752.65px;font-size:22.5px;line-height:22.5px;letter-spacing:-0.25px;color:#333;font-weight:normal;white-space:nowrap;transform:scaleX(0.9900);transform-origin:1.57px 0;-webkit-text-stroke:0.22px #fff;">1,549.70</div>
<div style="position:absolute;left:905.29px;top:752.65px;font-size:22.5px;line-height:22.5px;letter-spacing:-0.25px;color:#333;font-weight:normal;white-space:nowrap;transform:scaleX(0.9900);transform-origin:0.68px 0;-webkit-text-stroke:0.22px #fff;">0.00</div>
<div style="position:absolute;left:1040.22px;top:752.65px;font-size:22.5px;line-height:22.5px;letter-spacing:-0.25px;color:#333;font-weight:normal;white-space:nowrap;transform:scaleX(0.9900);transform-origin:1.57px 0;-webkit-text-stroke:0.22px #fff;">1,549.70</div>
<div style="position:absolute;left:1215.72px;top:752.65px;font-size:22.5px;line-height:22.5px;letter-spacing:-0.25px;color:#333;font-weight:normal;white-space:nowrap;transform:scaleX(0.9900);transform-origin:1.57px 0;-webkit-text-stroke:0.22px #fff;">1,554.30</div>
<div style="position:absolute;left:1422.74px;top:752.65px;font-size:22.5px;line-height:22.5px;letter-spacing:-0.25px;color:#333;font-weight:normal;white-space:nowrap;transform:scaleX(0.9900);transform-origin:1.57px 0;-webkit-text-stroke:0.22px #fff;">14.30</div>
<div style="position:absolute;left:1568.92px;top:752.65px;font-size:22.5px;line-height:22.5px;letter-spacing:-0.25px;color:#333;font-weight:normal;white-space:nowrap;transform:scaleX(0.9900);transform-origin:1.57px 0;-webkit-text-stroke:0.22px #fff;">1,568.70</div>
<div style="position:absolute;left:1744.62px;top:752.65px;font-size:22.5px;line-height:22.5px;letter-spacing:-0.25px;color:#333;font-weight:normal;white-space:nowrap;transform:scaleX(0.9900);transform-origin:1.57px 0;-webkit-text-stroke:0.22px #fff;">1,568.70</div>
<div style="position:absolute;left:1964.08px;top:752.65px;font-size:22.5px;line-height:22.5px;letter-spacing:-0.25px;color:#333;font-weight:normal;white-space:nowrap;transform:scaleX(0.9900);transform-origin:1.12px 0;-webkit-text-stroke:0.22px #fff;">6.80</div>
<div style="position:absolute;left:2097.72px;top:752.65px;font-size:22.5px;line-height:22.5px;letter-spacing:-0.25px;color:#333;font-weight:normal;white-space:nowrap;transform:scaleX(0.9900);transform-origin:1.57px 0;-webkit-text-stroke:0.22px #fff;">1,575.50</div>
<div style="position:absolute;left:2274.72px;top:752.65px;font-size:22.5px;line-height:22.5px;letter-spacing:-0.25px;color:#333;font-weight:normal;white-space:nowrap;transform:scaleX(0.9900);transform-origin:1.57px 0;-webkit-text-stroke:0.22px #fff;">1,575.50</div>
<div style="position:absolute;left:113.95px;top:793.95px;font-size:22.5px;line-height:22.5px;letter-spacing:-0.25px;color:#111;font-weight:normal;white-space:nowrap;transform:scaleX(0.8854);transform-origin:0.45px 0;-webkit-text-stroke:0.22px #fff;">TB</div>
<div style="position:absolute;left:284.30px;top:793.95px;font-size:22.5px;line-height:22.5px;letter-spacing:-0.25px;color:#111;font-weight:normal;white-space:nowrap;transform:scaleX(0.9723);transform-origin:1.80px 0;-webkit-text-stroke:0.22px #fff;">DTS-19</div>
<div style="position:absolute;left:284.10px;top:814.20px;width:75.00px;height:2.00px;background:#111;"></div>
<div style="position:absolute;left:472.00px;top:793.95px;font-size:22.5px;line-height:22.5px;letter-spacing:-0.25px;color:#111;font-weight:normal;white-space:nowrap;transform:scaleX(0.9415);transform-origin:0.90px 0;-webkit-text-stroke:0.22px #fff;">SYZ331C</div>
<div style="position:absolute;left:686.82px;top:793.95px;font-size:22.5px;line-height:22.5px;letter-spacing:-0.25px;color:#333;font-weight:normal;white-space:nowrap;transform:scaleX(0.9900);transform-origin:1.57px 0;-webkit-text-stroke:0.22px #fff;">1,502.40</div>
<div style="position:absolute;left:905.29px;top:793.95px;font-size:22.5px;line-height:22.5px;letter-spacing:-0.25px;color:#333;font-weight:normal;white-space:nowrap;transform:scaleX(0.9900);transform-origin:0.68px 0;-webkit-text-stroke:0.22px #fff;">0.00</div>
<div style="position:absolute;left:1040.22px;top:793.95px;font-size:22.5px;line-height:22.5px;letter-spacing:-0.25px;color:#333;font-weight:normal;white-space:nowrap;transform:scaleX(0.9900);transform-origin:1.57px 0;-webkit-text-stroke:0.22px #fff;">1,502.40</div>
<div style="position:absolute;left:1215.72px;top:793.95px;font-size:22.5px;line-height:22.5px;letter-spacing:-0.25px;color:#333;font-weight:normal;white-space:nowrap;transform:scaleX(0.9900);transform-origin:1.57px 0;-webkit-text-stroke:0.22px #fff;">1,503.30</div>
<div style="position:absolute;left:1422.74px;top:793.95px;font-size:22.5px;line-height:22.5px;letter-spacing:-0.25px;color:#333;font-weight:normal;white-space:nowrap;transform:scaleX(0.9900);transform-origin:1.57px 0;-webkit-text-stroke:0.22px #fff;">13.50</div>
<div style="position:absolute;left:1568.92px;top:793.95px;font-size:22.5px;line-height:22.5px;letter-spacing:-0.25px;color:#333;font-weight:normal;white-space:nowrap;transform:scaleX(0.9900);transform-origin:1.57px 0;-webkit-text-stroke:0.22px #fff;">1,516.90</div>
<div style="position:absolute;left:1744.62px;top:793.95px;font-size:22.5px;line-height:22.5px;letter-spacing:-0.25px;color:#333;font-weight:normal;white-space:nowrap;transform:scaleX(0.9900);transform-origin:1.57px 0;-webkit-text-stroke:0.22px #fff;">1,517.00</div>
<div style="position:absolute;left:1964.08px;top:793.95px;font-size:22.5px;line-height:22.5px;letter-spacing:-0.25px;color:#333;font-weight:normal;white-space:nowrap;transform:scaleX(0.9900);transform-origin:1.12px 0;-webkit-text-stroke:0.22px #fff;">6.80</div>
<div style="position:absolute;left:2097.72px;top:793.95px;font-size:22.5px;line-height:22.5px;letter-spacing:-0.25px;color:#333;font-weight:normal;white-space:nowrap;transform:scaleX(0.9900);transform-origin:1.57px 0;-webkit-text-stroke:0.22px #fff;">1,523.80</div>
<div style="position:absolute;left:2274.72px;top:793.95px;font-size:22.5px;line-height:22.5px;letter-spacing:-0.25px;color:#333;font-weight:normal;white-space:nowrap;transform:scaleX(0.9900);transform-origin:1.57px 0;-webkit-text-stroke:0.22px #fff;">1,523.80</div>
<div style="position:absolute;left:113.95px;top:835.25px;font-size:22.5px;line-height:22.5px;letter-spacing:-0.25px;color:#111;font-weight:normal;white-space:nowrap;transform:scaleX(0.8854);transform-origin:0.45px 0;-webkit-text-stroke:0.22px #fff;">TB</div>
<div style="position:absolute;left:284.19px;top:835.25px;font-size:22.5px;line-height:22.5px;letter-spacing:-0.25px;color:#111;font-weight:normal;white-space:nowrap;transform:scaleX(0.9723);transform-origin:1.80px 0;-webkit-text-stroke:0.22px #fff;">DTS-20</div>
<div style="position:absolute;left:283.99px;top:855.50px;width:75.22px;height:2.00px;background:#111;"></div>
<div style="position:absolute;left:472.00px;top:835.25px;font-size:22.5px;line-height:22.5px;letter-spacing:-0.25px;color:#111;font-weight:normal;white-space:nowrap;transform:scaleX(0.9415);transform-origin:0.90px 0;-webkit-text-stroke:0.22px #fff;">SYZ331C</div>
<div style="position:absolute;left:686.82px;top:835.25px;font-size:22.5px;line-height:22.5px;letter-spacing:-0.25px;color:#333;font-weight:normal;white-space:nowrap;transform:scaleX(0.9900);transform-origin:1.57px 0;-webkit-text-stroke:0.22px #fff;">1,685.90</div>
<div style="position:absolute;left:905.29px;top:835.25px;font-size:22.5px;line-height:22.5px;letter-spacing:-0.25px;color:#333;font-weight:normal;white-space:nowrap;transform:scaleX(0.9900);transform-origin:0.68px 0;-webkit-text-stroke:0.22px #fff;">0.00</div>
<div style="position:absolute;left:1040.22px;top:835.25px;font-size:22.5px;line-height:22.5px;letter-spacing:-0.25px;color:#333;font-weight:normal;white-space:nowrap;transform:scaleX(0.9900);transform-origin:1.57px 0;-webkit-text-stroke:0.22px #fff;">1,685.90</div>
<div style="position:absolute;left:1215.72px;top:835.25px;font-size:22.5px;line-height:22.5px;letter-spacing:-0.25px;color:#333;font-weight:normal;white-space:nowrap;transform:scaleX(0.9900);transform-origin:1.57px 0;-webkit-text-stroke:0.22px #fff;">1,687.20</div>
<div style="position:absolute;left:1422.74px;top:835.25px;font-size:22.5px;line-height:22.5px;letter-spacing:-0.25px;color:#333;font-weight:normal;white-space:nowrap;transform:scaleX(0.9900);transform-origin:1.57px 0;-webkit-text-stroke:0.22px #fff;">13.60</div>
<div style="position:absolute;left:1568.92px;top:835.25px;font-size:22.5px;line-height:22.5px;letter-spacing:-0.25px;color:#333;font-weight:normal;white-space:nowrap;transform:scaleX(0.9900);transform-origin:1.57px 0;-webkit-text-stroke:0.22px #fff;">1,700.80</div>
<div style="position:absolute;left:1744.62px;top:835.25px;font-size:22.5px;line-height:22.5px;letter-spacing:-0.25px;color:#333;font-weight:normal;white-space:nowrap;transform:scaleX(0.9900);transform-origin:1.57px 0;-webkit-text-stroke:0.22px #fff;">1,700.80</div>
<div style="position:absolute;left:1964.08px;top:835.25px;font-size:22.5px;line-height:22.5px;letter-spacing:-0.25px;color:#333;font-weight:normal;white-space:nowrap;transform:scaleX(0.9900);transform-origin:1.12px 0;-webkit-text-stroke:0.22px #fff;">6.20</div>
<div style="position:absolute;left:2097.72px;top:835.25px;font-size:22.5px;line-height:22.5px;letter-spacing:-0.25px;color:#333;font-weight:normal;white-space:nowrap;transform:scaleX(0.9900);transform-origin:1.57px 0;-webkit-text-stroke:0.22px #fff;">1,707.00</div>
<div style="position:absolute;left:2274.72px;top:835.25px;font-size:22.5px;line-height:22.5px;letter-spacing:-0.25px;color:#333;font-weight:normal;white-space:nowrap;transform:scaleX(0.9900);transform-origin:1.57px 0;-webkit-text-stroke:0.22px #fff;">1,707.70</div>
<div style="position:absolute;left:113.95px;top:876.55px;font-size:22.5px;line-height:22.5px;letter-spacing:-0.25px;color:#111;font-weight:normal;white-space:nowrap;transform:scaleX(0.8854);transform-origin:0.45px 0;-webkit-text-stroke:0.22px #fff;">TB</div>
<div style="position:absolute;left:284.30px;top:876.55px;font-size:22.5px;line-height:22.5px;letter-spacing:-0.25px;color:#111;font-weight:normal;white-space:nowrap;transform:scaleX(0.9723);transform-origin:1.80px 0;-webkit-text-stroke:0.22px #fff;">DTS-21</div>
<div style="position:absolute;left:284.10px;top:896.80px;width:75.00px;height:2.00px;background:#111;"></div>
<div style="position:absolute;left:472.00px;top:876.55px;font-size:22.5px;line-height:22.5px;letter-spacing:-0.25px;color:#111;font-weight:normal;white-space:nowrap;transform:scaleX(0.9415);transform-origin:0.90px 0;-webkit-text-stroke:0.22px #fff;">SYZ331C</div>
<div style="position:absolute;left:686.82px;top:876.55px;font-size:22.5px;line-height:22.5px;letter-spacing:-0.25px;color:#333;font-weight:normal;white-space:nowrap;transform:scaleX(0.9900);transform-origin:1.57px 0;-webkit-text-stroke:0.22px #fff;">1,534.30</div>
<div style="position:absolute;left:905.29px;top:876.55px;font-size:22.5px;line-height:22.5px;letter-spacing:-0.25px;color:#333;font-weight:normal;white-space:nowrap;transform:scaleX(0.9900);transform-origin:0.68px 0;-webkit-text-stroke:0.22px #fff;">0.00</div>
<div style="position:absolute;left:1040.22px;top:876.55px;font-size:22.5px;line-height:22.5px;letter-spacing:-0.25px;color:#333;font-weight:normal;white-space:nowrap;transform:scaleX(0.9900);transform-origin:1.57px 0;-webkit-text-stroke:0.22px #fff;">1,534.30</div>
<div style="position:absolute;left:1215.72px;top:876.55px;font-size:22.5px;line-height:22.5px;letter-spacing:-0.25px;color:#333;font-weight:normal;white-space:nowrap;transform:scaleX(0.9900);transform-origin:1.57px 0;-webkit-text-stroke:0.22px #fff;">1,535.30</div>
<div style="position:absolute;left:1422.74px;top:876.55px;font-size:22.5px;line-height:22.5px;letter-spacing:-0.25px;color:#333;font-weight:normal;white-space:nowrap;transform:scaleX(0.9900);transform-origin:1.57px 0;-webkit-text-stroke:0.22px #fff;">13.50</div>
<div style="position:absolute;left:1568.92px;top:876.55px;font-size:22.5px;line-height:22.5px;letter-spacing:-0.25px;color:#333;font-weight:normal;white-space:nowrap;transform:scaleX(0.9900);transform-origin:1.57px 0;-webkit-text-stroke:0.22px #fff;">1,548.80</div>
<div style="position:absolute;left:1744.62px;top:876.55px;font-size:22.5px;line-height:22.5px;letter-spacing:-0.25px;color:#333;font-weight:normal;white-space:nowrap;transform:scaleX(0.9900);transform-origin:1.57px 0;-webkit-text-stroke:0.22px #fff;">1,549.00</div>
<div style="position:absolute;left:1964.08px;top:876.55px;font-size:22.5px;line-height:22.5px;letter-spacing:-0.25px;color:#333;font-weight:normal;white-space:nowrap;transform:scaleX(0.9900);transform-origin:1.12px 0;-webkit-text-stroke:0.22px #fff;">6.90</div>
<div style="position:absolute;left:2097.72px;top:876.55px;font-size:22.5px;line-height:22.5px;letter-spacing:-0.25px;color:#333;font-weight:normal;white-space:nowrap;transform:scaleX(0.9900);transform-origin:1.57px 0;-webkit-text-stroke:0.22px #fff;">1,555.90</div>
<div style="position:absolute;left:2274.72px;top:876.55px;font-size:22.5px;line-height:22.5px;letter-spacing:-0.25px;color:#333;font-weight:normal;white-space:nowrap;transform:scaleX(0.9900);transform-origin:1.57px 0;-webkit-text-stroke:0.22px #fff;">1,555.90</div>
<div style="position:absolute;left:113.95px;top:917.85px;font-size:22.5px;line-height:22.5px;letter-spacing:-0.25px;color:#111;font-weight:normal;white-space:nowrap;transform:scaleX(0.8854);transform-origin:0.45px 0;-webkit-text-stroke:0.22px #fff;">TB</div>
<div style="position:absolute;left:284.30px;top:917.85px;font-size:22.5px;line-height:22.5px;letter-spacing:-0.25px;color:#111;font-weight:normal;white-space:nowrap;transform:scaleX(0.9723);transform-origin:1.80px 0;-webkit-text-stroke:0.22px #fff;">DTS-22</div>
<div style="position:absolute;left:284.10px;top:938.10px;width:75.00px;height:2.00px;background:#111;"></div>
<div style="position:absolute;left:472.00px;top:917.85px;font-size:22.5px;line-height:22.5px;letter-spacing:-0.25px;color:#111;font-weight:normal;white-space:nowrap;transform:scaleX(0.9415);transform-origin:0.90px 0;-webkit-text-stroke:0.22px #fff;">SYZ331C</div>
<div style="position:absolute;left:686.82px;top:917.85px;font-size:22.5px;line-height:22.5px;letter-spacing:-0.25px;color:#333;font-weight:normal;white-space:nowrap;transform:scaleX(0.9900);transform-origin:1.57px 0;-webkit-text-stroke:0.22px #fff;">1,541.90</div>
<div style="position:absolute;left:905.29px;top:917.85px;font-size:22.5px;line-height:22.5px;letter-spacing:-0.25px;color:#333;font-weight:normal;white-space:nowrap;transform:scaleX(0.9900);transform-origin:0.68px 0;-webkit-text-stroke:0.22px #fff;">0.00</div>
<div style="position:absolute;left:1040.22px;top:917.85px;font-size:22.5px;line-height:22.5px;letter-spacing:-0.25px;color:#333;font-weight:normal;white-space:nowrap;transform:scaleX(0.9900);transform-origin:1.57px 0;-webkit-text-stroke:0.22px #fff;">1,541.90</div>
<div style="position:absolute;left:1215.72px;top:917.85px;font-size:22.5px;line-height:22.5px;letter-spacing:-0.25px;color:#333;font-weight:normal;white-space:nowrap;transform:scaleX(0.9900);transform-origin:1.57px 0;-webkit-text-stroke:0.22px #fff;">1,544.00</div>
<div style="position:absolute;left:1422.74px;top:917.85px;font-size:22.5px;line-height:22.5px;letter-spacing:-0.25px;color:#333;font-weight:normal;white-space:nowrap;transform:scaleX(0.9900);transform-origin:1.57px 0;-webkit-text-stroke:0.22px #fff;">13.30</div>
<div style="position:absolute;left:1568.92px;top:917.85px;font-size:22.5px;line-height:22.5px;letter-spacing:-0.25px;color:#333;font-weight:normal;white-space:nowrap;transform:scaleX(0.9900);transform-origin:1.57px 0;-webkit-text-stroke:0.22px #fff;">1,557.50</div>
<div style="position:absolute;left:1744.62px;top:917.85px;font-size:22.5px;line-height:22.5px;letter-spacing:-0.25px;color:#333;font-weight:normal;white-space:nowrap;transform:scaleX(0.9900);transform-origin:1.57px 0;-webkit-text-stroke:0.22px #fff;">1,557.50</div>
<div style="position:absolute;left:1964.08px;top:917.85px;font-size:22.5px;line-height:22.5px;letter-spacing:-0.25px;color:#333;font-weight:normal;white-space:nowrap;transform:scaleX(0.9900);transform-origin:1.12px 0;-webkit-text-stroke:0.22px #fff;">6.90</div>
<div style="position:absolute;left:2097.72px;top:917.85px;font-size:22.5px;line-height:22.5px;letter-spacing:-0.25px;color:#333;font-weight:normal;white-space:nowrap;transform:scaleX(0.9900);transform-origin:1.57px 0;-webkit-text-stroke:0.22px #fff;">1,564.40</div>
<div style="position:absolute;left:2274.72px;top:917.85px;font-size:22.5px;line-height:22.5px;letter-spacing:-0.25px;color:#333;font-weight:normal;white-space:nowrap;transform:scaleX(0.9900);transform-origin:1.57px 0;-webkit-text-stroke:0.22px #fff;">1,564.40</div>
<div style="position:absolute;left:113.95px;top:959.15px;font-size:22.5px;line-height:22.5px;letter-spacing:-0.25px;color:#111;font-weight:normal;white-space:nowrap;transform:scaleX(0.8854);transform-origin:0.45px 0;-webkit-text-stroke:0.22px #fff;">TB</div>
<div style="position:absolute;left:284.19px;top:959.15px;font-size:22.5px;line-height:22.5px;letter-spacing:-0.25px;color:#111;font-weight:normal;white-space:nowrap;transform:scaleX(0.9723);transform-origin:1.80px 0;-webkit-text-stroke:0.22px #fff;">DTS-23</div>
<div style="position:absolute;left:283.99px;top:979.40px;width:75.22px;height:2.00px;background:#111;"></div>
<div style="position:absolute;left:472.00px;top:959.15px;font-size:22.5px;line-height:22.5px;letter-spacing:-0.25px;color:#111;font-weight:normal;white-space:nowrap;transform:scaleX(0.9415);transform-origin:0.90px 0;-webkit-text-stroke:0.22px #fff;">SYZ331C</div>
<div style="position:absolute;left:686.82px;top:959.15px;font-size:22.5px;line-height:22.5px;letter-spacing:-0.25px;color:#333;font-weight:normal;white-space:nowrap;transform:scaleX(0.9900);transform-origin:1.57px 0;-webkit-text-stroke:0.22px #fff;">1,530.70</div>
<div style="position:absolute;left:905.29px;top:959.15px;font-size:22.5px;line-height:22.5px;letter-spacing:-0.25px;color:#333;font-weight:normal;white-space:nowrap;transform:scaleX(0.9900);transform-origin:0.68px 0;-webkit-text-stroke:0.22px #fff;">0.00</div>
<div style="position:absolute;left:1040.22px;top:959.15px;font-size:22.5px;line-height:22.5px;letter-spacing:-0.25px;color:#333;font-weight:normal;white-space:nowrap;transform:scaleX(0.9900);transform-origin:1.57px 0;-webkit-text-stroke:0.22px #fff;">1,530.70</div>
<div style="position:absolute;left:1215.72px;top:959.15px;font-size:22.5px;line-height:22.5px;letter-spacing:-0.25px;color:#333;font-weight:normal;white-space:nowrap;transform:scaleX(0.9900);transform-origin:1.57px 0;-webkit-text-stroke:0.22px #fff;">1,530.70</div>
<div style="position:absolute;left:1434.89px;top:959.15px;font-size:22.5px;line-height:22.5px;letter-spacing:-0.25px;color:#333;font-weight:normal;white-space:nowrap;transform:scaleX(0.9900);transform-origin:0.90px 0;-webkit-text-stroke:0.22px #fff;">9.30</div>
<div style="position:absolute;left:1568.92px;top:959.15px;font-size:22.5px;line-height:22.5px;letter-spacing:-0.25px;color:#333;font-weight:normal;white-space:nowrap;transform:scaleX(0.9900);transform-origin:1.57px 0;-webkit-text-stroke:0.22px #fff;">1,542.10</div>
<div style="position:absolute;left:1744.62px;top:959.15px;font-size:22.5px;line-height:22.5px;letter-spacing:-0.25px;color:#333;font-weight:normal;white-space:nowrap;transform:scaleX(0.9900);transform-origin:1.57px 0;-webkit-text-stroke:0.22px #fff;">1,542.10</div>
<div style="position:absolute;left:1964.08px;top:959.15px;font-size:22.5px;line-height:22.5px;letter-spacing:-0.25px;color:#333;font-weight:normal;white-space:nowrap;transform:scaleX(0.9900);transform-origin:1.12px 0;-webkit-text-stroke:0.22px #fff;">7.20</div>
<div style="position:absolute;left:2097.72px;top:959.15px;font-size:22.5px;line-height:22.5px;letter-spacing:-0.25px;color:#333;font-weight:normal;white-space:nowrap;transform:scaleX(0.9900);transform-origin:1.57px 0;-webkit-text-stroke:0.22px #fff;">1,549.30</div>
<div style="position:absolute;left:2274.72px;top:959.15px;font-size:22.5px;line-height:22.5px;letter-spacing:-0.25px;color:#333;font-weight:normal;white-space:nowrap;transform:scaleX(0.9900);transform-origin:1.57px 0;-webkit-text-stroke:0.22px #fff;">1,549.40</div>
<div style="position:absolute;left:42.00px;top:0.00px;width:2438.00px;height:86.00px;background:#fff;"></div>
<div style="position:absolute;left:601.40px;top:0.00px;width:2438.00px;height:85.00px;background:#add8e6;"></div>
<div style="position:absolute;left:42.00px;top:41.00px;width:559.40px;height:44.00px;background:#add8e6;"></div>
<div style="position:absolute;left:601.00px;top:0.00px;width:2438.00px;height:1.00px;background:#7b7b7b;"></div>
<div style="position:absolute;left:42.00px;top:41.00px;width:2438.00px;height:1.00px;background:#7b7b7b;"></div>
<div style="position:absolute;left:42.00px;top:85.00px;width:2438.00px;height:1.00px;background:#7b7b7b;"></div>
<div style="position:absolute;left:42.00px;top:0.00px;width:1.00px;height:41.00px;background:#d0d0d0;"></div>
<div style="position:absolute;left:42.00px;top:41.00px;width:1.00px;height:45.00px;background:#7b7b7b;"></div>
<div style="position:absolute;left:210.00px;top:41.00px;width:1.00px;height:45.00px;background:#7b7b7b;"></div>
<div style="position:absolute;left:433.00px;top:41.00px;width:1.00px;height:45.00px;background:#7b7b7b;"></div>
<div style="position:absolute;left:601.00px;top:0.00px;width:1.00px;height:86.00px;background:#7b7b7b;"></div>
<div style="position:absolute;left:777.00px;top:41.00px;width:1.00px;height:45.00px;background:#7b7b7b;"></div>
<div style="position:absolute;left:953.00px;top:41.00px;width:1.00px;height:45.00px;background:#7b7b7b;"></div>
<div style="position:absolute;left:1130.00px;top:0.00px;width:1.00px;height:86.00px;background:#7b7b7b;"></div>
<div style="position:absolute;left:1306.00px;top:41.00px;width:1.00px;height:45.00px;background:#7b7b7b;"></div>
<div style="position:absolute;left:1483.00px;top:41.00px;width:1.00px;height:45.00px;background:#7b7b7b;"></div>
<div style="position:absolute;left:1659.00px;top:0.00px;width:1.00px;height:86.00px;background:#7b7b7b;"></div>
<div style="position:absolute;left:1835.00px;top:41.00px;width:1.00px;height:45.00px;background:#7b7b7b;"></div>
<div style="position:absolute;left:2012.00px;top:41.00px;width:1.00px;height:45.00px;background:#7b7b7b;"></div>
<div style="position:absolute;left:2188.00px;top:0.00px;width:1.00px;height:86.00px;background:#7b7b7b;"></div>
<div style="position:absolute;left:2365.00px;top:41.00px;width:1.00px;height:45.00px;background:#7b7b7b;"></div>
<div style="position:absolute;left:2541.00px;top:41.00px;width:1.00px;height:45.00px;background:#7b7b7b;"></div>
<div style="position:absolute;left:2718.00px;top:0.00px;width:1.00px;height:86.00px;background:#7b7b7b;"></div>
<div style="position:absolute;left:106.66px;top:50.66px;font-size:24.5px;line-height:24.5px;letter-spacing:-0.45px;color:#000;font-weight:bold;white-space:nowrap;transform:scaleX(0.9046);transform-origin:0.49px 0;-webkit-text-stroke:0.45px #add8e6;">Site</div>
<div style="position:absolute;left:279.48px;top:50.66px;font-size:24.5px;line-height:24.5px;letter-spacing:-0.45px;color:#000;font-weight:bold;white-space:nowrap;transform:scaleX(0.9943);transform-origin:1.47px 0;-webkit-text-stroke:0.45px #add8e6;">Unit No</div>
<div style="position:absolute;left:482.68px;top:50.66px;font-size:24.5px;line-height:24.5px;letter-spacing:-0.45px;color:#444;font-weight:bold;white-space:nowrap;transform:scaleX(1.0085);transform-origin:1.47px 0;-webkit-text-stroke:0.45px #add8e6;">Model</div>
<div style="position:absolute;left:614.83px;top:53.56px;font-size:24.5px;line-height:24.5px;letter-spacing:-0.45px;color:#000;font-weight:bold;white-space:nowrap;transform:scaleX(1.0322);transform-origin:1.47px 0;-webkit-text-stroke:0.6px #add8e6;">HM Previous</div>
<div style="position:absolute;left:843.28px;top:53.56px;font-size:24.5px;line-height:24.5px;letter-spacing:-0.45px;color:#000;font-weight:bold;white-space:nowrap;transform:scaleX(1.1894);transform-origin:1.47px 0;-webkit-text-stroke:0.6px #add8e6;">HM</div>
<div style="position:absolute;left:972.88px;top:53.56px;font-size:24.5px;line-height:24.5px;letter-spacing:-0.45px;color:#000;font-weight:bold;white-space:nowrap;transform:scaleX(1.0595);transform-origin:1.47px 0;-webkit-text-stroke:0.6px #add8e6;">HM Current</div>
<div style="position:absolute;left:1143.93px;top:53.56px;font-size:24.5px;line-height:24.5px;letter-spacing:-0.45px;color:#000;font-weight:bold;white-space:nowrap;transform:scaleX(1.0322);transform-origin:1.47px 0;-webkit-text-stroke:0.6px #add8e6;">HM Previous</div>
<div style="position:absolute;left:1372.53px;top:53.56px;font-size:24.5px;line-height:24.5px;letter-spacing:-0.45px;color:#000;font-weight:bold;white-space:nowrap;transform:scaleX(1.1894);transform-origin:1.47px 0;-webkit-text-stroke:0.6px #add8e6;">HM</div>
<div style="position:absolute;left:1502.03px;top:53.56px;font-size:24.5px;line-height:24.5px;letter-spacing:-0.45px;color:#000;font-weight:bold;white-space:nowrap;transform:scaleX(1.0595);transform-origin:1.47px 0;-webkit-text-stroke:0.6px #add8e6;">HM Current</div>
<div style="position:absolute;left:1672.73px;top:53.56px;font-size:24.5px;line-height:24.5px;letter-spacing:-0.45px;color:#000;font-weight:bold;white-space:nowrap;transform:scaleX(1.0322);transform-origin:1.47px 0;-webkit-text-stroke:0.6px #add8e6;">HM Previous</div>
<div style="position:absolute;left:1901.58px;top:53.56px;font-size:24.5px;line-height:24.5px;letter-spacing:-0.45px;color:#000;font-weight:bold;white-space:nowrap;transform:scaleX(1.1894);transform-origin:1.47px 0;-webkit-text-stroke:0.6px #add8e6;">HM</div>
<div style="position:absolute;left:2031.03px;top:53.56px;font-size:24.5px;line-height:24.5px;letter-spacing:-0.45px;color:#000;font-weight:bold;white-space:nowrap;transform:scaleX(1.0595);transform-origin:1.47px 0;-webkit-text-stroke:0.6px #add8e6;">HM Current</div>
<div style="position:absolute;left:2202.18px;top:53.56px;font-size:24.5px;line-height:24.5px;letter-spacing:-0.45px;color:#000;font-weight:bold;white-space:nowrap;transform:scaleX(1.0322);transform-origin:1.47px 0;-webkit-text-stroke:0.6px #add8e6;">HM Previous</div>
<div style="position:absolute;left:2431.33px;top:53.56px;font-size:24.5px;line-height:24.5px;letter-spacing:-0.45px;color:#000;font-weight:bold;white-space:nowrap;transform:scaleX(1.1894);transform-origin:1.47px 0;-webkit-text-stroke:0.6px #add8e6;">HM</div>
<div style="position:absolute;left:2560.63px;top:53.56px;font-size:24.5px;line-height:24.5px;letter-spacing:-0.45px;color:#000;font-weight:bold;white-space:nowrap;transform:scaleX(1.0595);transform-origin:1.47px 0;-webkit-text-stroke:0.6px #add8e6;">HM Current</div>
<div style="position:absolute;left:819.12px;top:10.55px;font-size:22.5px;line-height:22.5px;letter-spacing:0.3px;color:#000;font-weight:bold;white-space:nowrap;transform:scaleX(1.0461);transform-origin:0.68px 0;-webkit-text-stroke:0.5px #add8e6;">8/1/2025</div>
<div style="position:absolute;left:1348.13px;top:10.55px;font-size:22.5px;line-height:22.5px;letter-spacing:0.3px;color:#000;font-weight:bold;white-space:nowrap;transform:scaleX(1.0461);transform-origin:0.68px 0;-webkit-text-stroke:0.5px #add8e6;">8/2/2025</div>
<div style="position:absolute;left:1876.88px;top:10.55px;font-size:22.5px;line-height:22.5px;letter-spacing:0.3px;color:#000;font-weight:bold;white-space:nowrap;transform:scaleX(1.0461);transform-origin:0.68px 0;-webkit-text-stroke:0.5px #add8e6;">8/3/2025</div>
<div style="position:absolute;left:2406.17px;top:10.55px;font-size:22.5px;line-height:22.5px;letter-spacing:0.3px;color:#000;font-weight:bold;white-space:nowrap;transform:scaleX(1.0461);transform-origin:0.68px 0;-webkit-text-stroke:0.5px #add8e6;">8/4/2025</div>
</div>
<div style="position:absolute;left:2438.00px;top:383.00px;width:27.00px;height:1002.00px;background:#fcfcfc;"></div>
<div style="position:absolute;left:0.00px;top:1357.50px;width:2438.00px;height:27.50px;background:#fcfcfc;"></div>
<svg style="position:absolute;left:2438px;top:392px;" width="26" height="22" viewBox="0 0 26 22"><polygon points="6.8,15.7 13,5.8 19.2,15.7" fill="#8a8a8a" stroke="#8a8a8a" stroke-width="3.2" stroke-linejoin="round"/></svg>
<svg style="position:absolute;left:2438px;top:1327px;" width="26" height="22" viewBox="0 0 26 22"><polygon points="6.8,6.7 13,15.3 19.2,6.7" fill="#8a8a8a" stroke="#8a8a8a" stroke-width="3.2" stroke-linejoin="round"/></svg>
<div style="position:absolute;left:2443.20px;top:476.40px;width:16.00px;height:404.00px;background:#8a8a8a;border-radius:8px;"></div>
<div style="position:absolute;left:40.00px;top:1362.70px;width:327.70px;height:15.90px;background:#8a8a8a;border-radius:8px;"></div>
<svg style="position:absolute;left:8px;top:1358px;" width="24" height="26" viewBox="0 0 24 26"><polygon points="16.4,7 7.5,12.8 16.4,18.6" fill="#8a8a8a" stroke="#8a8a8a" stroke-width="3.2" stroke-linejoin="round"/></svg>
<svg style="position:absolute;left:2406px;top:1358px;" width="24" height="26" viewBox="0 0 24 26"><polygon points="7.5,7 16.4,12.8 7.5,18.6" fill="#8a8a8a" stroke="#8a8a8a" stroke-width="3.2" stroke-linejoin="round"/></svg>
<div style="position:absolute;left:0.00px;top:0.00px;width:1.00px;height:1385.00px;background:rgba(0,0,0,0.17);"></div>
<div style="position:absolute;left:1.00px;top:0.00px;width:2464.00px;height:1.00px;background:rgba(0,0,0,0.12);"></div>
<svg style="position:absolute;left:1100px;top:592px;" width="26" height="36" viewBox="0 0 26 36"><path d="M3.2,3.3 V27 L8.8,21.6 L12.6,30.4 L16.3,28.8 L12.6,20.3 H20.2 Z" fill="#fff" stroke="#111" stroke-width="1.2" stroke-linejoin="round"/></svg>
</div></div></div></body></html>
